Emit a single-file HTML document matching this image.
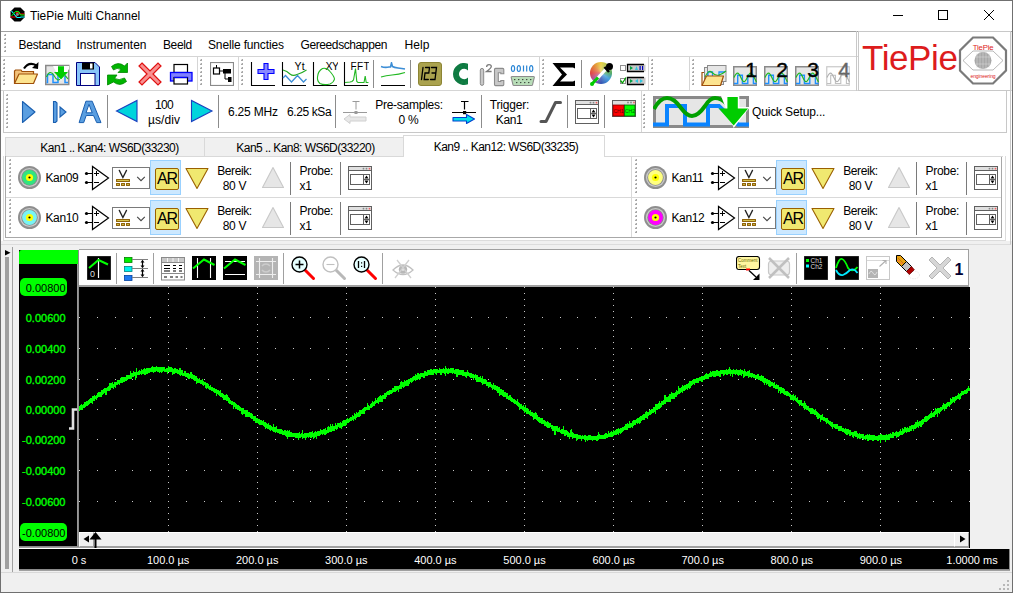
<!DOCTYPE html>
<html><head><meta charset="utf-8"><style>
html,body{margin:0;padding:0;}
body{width:1013px;height:593px;overflow:hidden;position:relative;background:#f0f0f0;font-family:"Liberation Sans", sans-serif;}
body>div,body>svg{position:absolute;}
</style></head><body>
<div style="left:0px;top:0px;width:1013px;height:31px;background:#fff"></div>
<div style="left:0px;top:0px;width:1013px;height:1px;background:#707070"></div>
<div style="left:0px;top:0px;width:1px;height:593px;background:#707070"></div>
<div style="left:1012px;top:0px;width:1px;height:593px;background:#707070"></div>
<div style="left:0px;top:592px;width:1013px;height:1px;background:#707070"></div>
<div style="left:1px;top:31px;width:1011px;height:1px;background:#a0a0a0"></div>
<svg style="left:10px;top:7px" width="15" height="15" viewBox="0 0 15 15"><polygon points="4.5,0.5 10.5,0.5 14.5,4.5 14.5,10.5 10.5,14.5 4.5,14.5 0.5,10.5 0.5,4.5" fill="#000"/><path d="M0.5,10 H5.5 L7,8.5" stroke="#f00" stroke-width="1.1" fill="none"/><path d="M6,7 Q7,4.5 8.5,5 L10,7 H14.5" stroke="#f00" stroke-width="1.1" fill="none"/><path d="M1.5,4 L7,10.5 H10 L11,10 H14.5" stroke="#0ff" stroke-width="1.1" fill="none"/><path d="M1.5,9 L5,5 Q7,3.5 9,5 L10.5,8 H14.5" stroke="#0f0" stroke-width="1" fill="none"/><circle cx="7.5" cy="7.5" r="1.4" fill="#888"/></svg>
<div style="left:30px;top:9.84px;font-size:12px;line-height:12px;color:#000;white-space:nowrap;letter-spacing:0px;">TiePie Multi Channel</div>
<svg style="left:892px;top:10px" width="12" height="12" viewBox="0 0 12 12"><path d="M1,5.5 H11" stroke="#000" stroke-width="1"/></svg>
<svg style="left:937px;top:9px" width="12" height="12" viewBox="0 0 12 12"><rect x="1.5" y="1.5" width="9" height="9" fill="none" stroke="#000" stroke-width="1"/></svg>
<svg style="left:983px;top:9px" width="12" height="12" viewBox="0 0 12 12"><path d="M1,1 L11,11 M11,1 L1,11" stroke="#000" stroke-width="1"/></svg>
<div style="left:1px;top:32px;width:857px;height:58px;background:#fff"></div>
<div style="left:1px;top:56px;width:857px;height:1px;background:#d5d5d5"></div>
<div style="left:1px;top:90px;width:1011px;height:1px;background:#d5d5d5"></div>
<svg style="left:4px;top:34px" width="2" height="18" viewBox="0 0 2 18"><rect x="0" y="0" width="2" height="2" fill="#a8a8a8"/><rect x="0" y="0" width="1" height="1" fill="#e0e0e0"/><rect x="0" y="4" width="2" height="2" fill="#a8a8a8"/><rect x="0" y="4" width="1" height="1" fill="#e0e0e0"/><rect x="0" y="8" width="2" height="2" fill="#a8a8a8"/><rect x="0" y="8" width="1" height="1" fill="#e0e0e0"/><rect x="0" y="12" width="2" height="2" fill="#a8a8a8"/><rect x="0" y="12" width="1" height="1" fill="#e0e0e0"/><rect x="0" y="16" width="2" height="2" fill="#a8a8a8"/><rect x="0" y="16" width="1" height="1" fill="#e0e0e0"/></svg>
<div style="left:18.5px;top:38.84px;font-size:12px;line-height:12px;color:#000;white-space:nowrap;letter-spacing:-0.25px;">Bestand</div>
<div style="left:76.5px;top:38.84px;font-size:12px;line-height:12px;color:#000;white-space:nowrap;letter-spacing:0px;">Instrumenten</div>
<div style="left:163px;top:38.84px;font-size:12px;line-height:12px;color:#000;white-space:nowrap;letter-spacing:-0.4px;">Beeld</div>
<div style="left:208px;top:38.84px;font-size:12px;line-height:12px;color:#000;white-space:nowrap;letter-spacing:-0.15px;">Snelle functies</div>
<div style="left:300.5px;top:38.84px;font-size:12px;line-height:12px;color:#000;white-space:nowrap;letter-spacing:-0.4px;">Gereedschappen</div>
<div style="left:404.5px;top:38.84px;font-size:12px;line-height:12px;color:#000;white-space:nowrap;letter-spacing:0.1px;">Help</div>
<div style="left:856px;top:31px;width:1px;height:60px;background:#c8c8c8"></div>
<div style="left:858px;top:31px;width:153px;height:60px;background:#fff;box-sizing:border-box;border:1px solid #c8c8c8"></div>
<svg style="left:3px;top:59px" width="2" height="26" viewBox="0 0 2 26"><rect x="0" y="0" width="2" height="2" fill="#a8a8a8"/><rect x="0" y="0" width="1" height="1" fill="#e0e0e0"/><rect x="0" y="4" width="2" height="2" fill="#a8a8a8"/><rect x="0" y="4" width="1" height="1" fill="#e0e0e0"/><rect x="0" y="8" width="2" height="2" fill="#a8a8a8"/><rect x="0" y="8" width="1" height="1" fill="#e0e0e0"/><rect x="0" y="12" width="2" height="2" fill="#a8a8a8"/><rect x="0" y="12" width="1" height="1" fill="#e0e0e0"/><rect x="0" y="16" width="2" height="2" fill="#a8a8a8"/><rect x="0" y="16" width="1" height="1" fill="#e0e0e0"/><rect x="0" y="20" width="2" height="2" fill="#a8a8a8"/><rect x="0" y="20" width="1" height="1" fill="#e0e0e0"/><rect x="0" y="24" width="2" height="2" fill="#a8a8a8"/><rect x="0" y="24" width="1" height="1" fill="#e0e0e0"/></svg>
<div style="left:197px;top:57px;width:1px;height:33px;background:#d5d5d5"></div>
<div style="left:238px;top:57px;width:1px;height:33px;background:#d5d5d5"></div>
<div style="left:539px;top:57px;width:1px;height:33px;background:#d5d5d5"></div>
<div style="left:648px;top:57px;width:1px;height:33px;background:#d5d5d5"></div>
<div style="left:689px;top:57px;width:1px;height:33px;background:#d5d5d5"></div>
<svg style="left:200px;top:59px" width="2" height="26" viewBox="0 0 2 26"><rect x="0" y="0" width="2" height="2" fill="#a8a8a8"/><rect x="0" y="0" width="1" height="1" fill="#e0e0e0"/><rect x="0" y="4" width="2" height="2" fill="#a8a8a8"/><rect x="0" y="4" width="1" height="1" fill="#e0e0e0"/><rect x="0" y="8" width="2" height="2" fill="#a8a8a8"/><rect x="0" y="8" width="1" height="1" fill="#e0e0e0"/><rect x="0" y="12" width="2" height="2" fill="#a8a8a8"/><rect x="0" y="12" width="1" height="1" fill="#e0e0e0"/><rect x="0" y="16" width="2" height="2" fill="#a8a8a8"/><rect x="0" y="16" width="1" height="1" fill="#e0e0e0"/><rect x="0" y="20" width="2" height="2" fill="#a8a8a8"/><rect x="0" y="20" width="1" height="1" fill="#e0e0e0"/><rect x="0" y="24" width="2" height="2" fill="#a8a8a8"/><rect x="0" y="24" width="1" height="1" fill="#e0e0e0"/></svg>
<svg style="left:241px;top:59px" width="2" height="26" viewBox="0 0 2 26"><rect x="0" y="0" width="2" height="2" fill="#a8a8a8"/><rect x="0" y="0" width="1" height="1" fill="#e0e0e0"/><rect x="0" y="4" width="2" height="2" fill="#a8a8a8"/><rect x="0" y="4" width="1" height="1" fill="#e0e0e0"/><rect x="0" y="8" width="2" height="2" fill="#a8a8a8"/><rect x="0" y="8" width="1" height="1" fill="#e0e0e0"/><rect x="0" y="12" width="2" height="2" fill="#a8a8a8"/><rect x="0" y="12" width="1" height="1" fill="#e0e0e0"/><rect x="0" y="16" width="2" height="2" fill="#a8a8a8"/><rect x="0" y="16" width="1" height="1" fill="#e0e0e0"/><rect x="0" y="20" width="2" height="2" fill="#a8a8a8"/><rect x="0" y="20" width="1" height="1" fill="#e0e0e0"/><rect x="0" y="24" width="2" height="2" fill="#a8a8a8"/><rect x="0" y="24" width="1" height="1" fill="#e0e0e0"/></svg>
<svg style="left:542px;top:59px" width="2" height="26" viewBox="0 0 2 26"><rect x="0" y="0" width="2" height="2" fill="#a8a8a8"/><rect x="0" y="0" width="1" height="1" fill="#e0e0e0"/><rect x="0" y="4" width="2" height="2" fill="#a8a8a8"/><rect x="0" y="4" width="1" height="1" fill="#e0e0e0"/><rect x="0" y="8" width="2" height="2" fill="#a8a8a8"/><rect x="0" y="8" width="1" height="1" fill="#e0e0e0"/><rect x="0" y="12" width="2" height="2" fill="#a8a8a8"/><rect x="0" y="12" width="1" height="1" fill="#e0e0e0"/><rect x="0" y="16" width="2" height="2" fill="#a8a8a8"/><rect x="0" y="16" width="1" height="1" fill="#e0e0e0"/><rect x="0" y="20" width="2" height="2" fill="#a8a8a8"/><rect x="0" y="20" width="1" height="1" fill="#e0e0e0"/><rect x="0" y="24" width="2" height="2" fill="#a8a8a8"/><rect x="0" y="24" width="1" height="1" fill="#e0e0e0"/></svg>
<svg style="left:651px;top:59px" width="2" height="26" viewBox="0 0 2 26"><rect x="0" y="0" width="2" height="2" fill="#a8a8a8"/><rect x="0" y="0" width="1" height="1" fill="#e0e0e0"/><rect x="0" y="4" width="2" height="2" fill="#a8a8a8"/><rect x="0" y="4" width="1" height="1" fill="#e0e0e0"/><rect x="0" y="8" width="2" height="2" fill="#a8a8a8"/><rect x="0" y="8" width="1" height="1" fill="#e0e0e0"/><rect x="0" y="12" width="2" height="2" fill="#a8a8a8"/><rect x="0" y="12" width="1" height="1" fill="#e0e0e0"/><rect x="0" y="16" width="2" height="2" fill="#a8a8a8"/><rect x="0" y="16" width="1" height="1" fill="#e0e0e0"/><rect x="0" y="20" width="2" height="2" fill="#a8a8a8"/><rect x="0" y="20" width="1" height="1" fill="#e0e0e0"/><rect x="0" y="24" width="2" height="2" fill="#a8a8a8"/><rect x="0" y="24" width="1" height="1" fill="#e0e0e0"/></svg>
<svg style="left:692px;top:59px" width="2" height="26" viewBox="0 0 2 26"><rect x="0" y="0" width="2" height="2" fill="#a8a8a8"/><rect x="0" y="0" width="1" height="1" fill="#e0e0e0"/><rect x="0" y="4" width="2" height="2" fill="#a8a8a8"/><rect x="0" y="4" width="1" height="1" fill="#e0e0e0"/><rect x="0" y="8" width="2" height="2" fill="#a8a8a8"/><rect x="0" y="8" width="1" height="1" fill="#e0e0e0"/><rect x="0" y="12" width="2" height="2" fill="#a8a8a8"/><rect x="0" y="12" width="1" height="1" fill="#e0e0e0"/><rect x="0" y="16" width="2" height="2" fill="#a8a8a8"/><rect x="0" y="16" width="1" height="1" fill="#e0e0e0"/><rect x="0" y="20" width="2" height="2" fill="#a8a8a8"/><rect x="0" y="20" width="1" height="1" fill="#e0e0e0"/><rect x="0" y="24" width="2" height="2" fill="#a8a8a8"/><rect x="0" y="24" width="1" height="1" fill="#e0e0e0"/></svg>
<div style="left:373px;top:60px;width:1px;height:28px;background:#8c8c8c"></div>
<div style="left:410px;top:60px;width:1px;height:28px;background:#8c8c8c"></div>
<div style="left:581px;top:60px;width:1px;height:28px;background:#8c8c8c"></div>
<div style="left:1px;top:91px;width:1011px;height:46px;background:#fff"></div>
<div style="left:3px;top:91px;width:1004px;height:42px;box-sizing:border-box;border:1px solid #c8c8c8;border-top:none"></div>
<svg style="left:6px;top:94px" width="2" height="34" viewBox="0 0 2 34"><rect x="0" y="0" width="2" height="2" fill="#a8a8a8"/><rect x="0" y="0" width="1" height="1" fill="#e0e0e0"/><rect x="0" y="4" width="2" height="2" fill="#a8a8a8"/><rect x="0" y="4" width="1" height="1" fill="#e0e0e0"/><rect x="0" y="8" width="2" height="2" fill="#a8a8a8"/><rect x="0" y="8" width="1" height="1" fill="#e0e0e0"/><rect x="0" y="12" width="2" height="2" fill="#a8a8a8"/><rect x="0" y="12" width="1" height="1" fill="#e0e0e0"/><rect x="0" y="16" width="2" height="2" fill="#a8a8a8"/><rect x="0" y="16" width="1" height="1" fill="#e0e0e0"/><rect x="0" y="20" width="2" height="2" fill="#a8a8a8"/><rect x="0" y="20" width="1" height="1" fill="#e0e0e0"/><rect x="0" y="24" width="2" height="2" fill="#a8a8a8"/><rect x="0" y="24" width="1" height="1" fill="#e0e0e0"/><rect x="0" y="28" width="2" height="2" fill="#a8a8a8"/><rect x="0" y="28" width="1" height="1" fill="#e0e0e0"/><rect x="0" y="32" width="2" height="2" fill="#a8a8a8"/><rect x="0" y="32" width="1" height="1" fill="#e0e0e0"/></svg>
<svg style="left:643px;top:94px" width="2" height="34" viewBox="0 0 2 34"><rect x="0" y="0" width="2" height="2" fill="#a8a8a8"/><rect x="0" y="0" width="1" height="1" fill="#e0e0e0"/><rect x="0" y="4" width="2" height="2" fill="#a8a8a8"/><rect x="0" y="4" width="1" height="1" fill="#e0e0e0"/><rect x="0" y="8" width="2" height="2" fill="#a8a8a8"/><rect x="0" y="8" width="1" height="1" fill="#e0e0e0"/><rect x="0" y="12" width="2" height="2" fill="#a8a8a8"/><rect x="0" y="12" width="1" height="1" fill="#e0e0e0"/><rect x="0" y="16" width="2" height="2" fill="#a8a8a8"/><rect x="0" y="16" width="1" height="1" fill="#e0e0e0"/><rect x="0" y="20" width="2" height="2" fill="#a8a8a8"/><rect x="0" y="20" width="1" height="1" fill="#e0e0e0"/><rect x="0" y="24" width="2" height="2" fill="#a8a8a8"/><rect x="0" y="24" width="1" height="1" fill="#e0e0e0"/><rect x="0" y="28" width="2" height="2" fill="#a8a8a8"/><rect x="0" y="28" width="1" height="1" fill="#e0e0e0"/><rect x="0" y="32" width="2" height="2" fill="#a8a8a8"/><rect x="0" y="32" width="1" height="1" fill="#e0e0e0"/></svg>
<div style="left:641px;top:91px;width:1px;height:41px;background:#d5d5d5"></div>
<div style="left:107px;top:95px;width:1px;height:33px;background:#8c8c8c"></div>
<div style="left:218px;top:95px;width:1px;height:33px;background:#8c8c8c"></div>
<div style="left:335px;top:95px;width:1px;height:33px;background:#8c8c8c"></div>
<div style="left:481px;top:95px;width:1px;height:33px;background:#8c8c8c"></div>
<div style="left:567px;top:95px;width:1px;height:33px;background:#8c8c8c"></div>
<div style="left:604px;top:95px;width:1px;height:33px;background:#8c8c8c"></div>
<div style="left:1px;top:137px;width:1011px;height:104px;background:#fff"></div>
<div style="left:5px;top:137px;width:399px;height:20px;background:#f0f0f0;box-sizing:border-box;border:1px solid #d9d9d9"></div>
<div style="left:204px;top:138px;width:1px;height:18px;background:#d9d9d9"></div>
<div style="left:403px;top:135px;width:202px;height:22px;background:#fff;box-sizing:border-box;border:1px solid #d9d9d9;border-bottom:none"></div>
<div style="left:-90.5px;top:141.84px;width:400px;text-align:center;font-size:12px;line-height:12px;color:#000;letter-spacing:-0.55px;">Kan1 .. Kan4: WS6D(33230)</div>
<div style="left:105.5px;top:141.84px;width:400px;text-align:center;font-size:12px;line-height:12px;color:#000;letter-spacing:-0.55px;">Kan5 .. Kan8: WS6D(33220)</div>
<div style="left:306px;top:140.84px;width:400px;text-align:center;font-size:12px;line-height:12px;color:#000;letter-spacing:-0.55px;">Kan9 .. Kan12: WS6D(33235)</div>
<div style="left:1px;top:156px;width:1010px;height:89px;box-sizing:border-box;border-right:1px solid #c8c8c8;border-bottom:1px solid #dcdcdc"></div>
<div style="left:3px;top:156px;width:1003px;height:85px;box-sizing:border-box;border:1px solid #dcdcdc;border-top:none"></div>
<div style="left:5px;top:156px;width:997px;height:82px;box-sizing:border-box;border:1px solid #a8a8a8;border-top:none"></div>
<div style="left:605px;top:156px;width:398px;height:1px;background:#d9d9d9"></div>
<div style="left:6px;top:197px;width:995px;height:1px;background:#d9d9d9"></div>
<div style="left:631px;top:157px;width:1px;height:80px;background:#d9d9d9"></div>
<div style="left:1010px;top:91px;width:1px;height:66px;background:#c8c8c8"></div>
<div style="left:12px;top:247px;width:1px;height:325px;background:#a0a0a0"></div>
<div style="left:5px;top:257px;width:4px;height:312px;background:#a0a0a0"></div>
<svg style="left:5px;top:250px" width="6" height="6" viewBox="0 0 6 6"><polygon points="0,0 5.5,2.75 0,5.5" fill="#000"/></svg>
<div style="left:19px;top:250px;width:59px;height:297px;background:#000"></div>
<div style="left:19px;top:250px;width:59px;height:14px;background:#00ff00;border-top-left-radius:3px"></div>
<div style="left:77px;top:264px;width:1px;height:283px;background:#9a9a9a"></div>
<div style="left:78px;top:250px;width:1px;height:297px;background:#8a8a8a"></div>
<div style="left:19px;top:546px;width:60px;height:1px;background:#8a8a8a"></div>
<div style="left:19px;top:547px;width:60px;height:1px;background:#a0a0a0"></div>
<div style="left:19px;top:548px;width:60px;height:1px;background:#fff"></div>
<div style="left:79px;top:249px;width:890px;height:38px;background:#fff;box-sizing:border-box;border-top:1px solid #a0a0a0;border-right:1px solid #a0a0a0;border-bottom:2px solid #a0a0a0"></div>
<div style="left:79px;top:287px;width:891px;height:245px;background:#000"></div>
<div style="left:79px;top:532px;width:891px;height:16px;background:#f0f0f0"></div>
<div style="left:79px;top:532px;width:891px;height:1px;background:#fff"></div>
<div style="left:79px;top:547px;width:891px;height:1px;background:#a0a0a0"></div>
<div style="left:79px;top:548px;width:891px;height:1px;background:#fff"></div>
<div style="left:79px;top:532px;width:15px;height:15px;box-sizing:border-box;border-top:1px solid #fff;border-left:1px solid #fff;border-right:1px solid #a0a0a0;border-bottom:1px solid #a0a0a0;background:#f0f0f0"></div>
<div style="left:954px;top:532px;width:15px;height:15px;box-sizing:border-box;border-top:1px solid #fff;border-left:1px solid #fff;border-right:1px solid #a0a0a0;border-bottom:1px solid #a0a0a0;background:#f0f0f0"></div>
<div style="left:94px;top:546px;width:860px;height:1px;background:#a0a0a0"></div>
<div style="left:969px;top:532px;width:1px;height:16px;background:#000"></div>
<svg style="left:83px;top:535px" width="7" height="8" viewBox="0 0 7 8"><polygon points="0.5,4 6,0.5 6,7.5" fill="#000"/></svg>
<svg style="left:959px;top:535px" width="7" height="8" viewBox="0 0 7 8"><polygon points="6.5,4 1,0.5 1,7.5" fill="#000"/></svg>
<svg style="left:89px;top:531px" width="13" height="17" viewBox="0 0 13 17"><polygon points="6.5,1 12.5,8.5 0.5,8.5" fill="#000"/><rect x="5.5" y="8" width="2" height="9" fill="#000"/></svg>
<svg style="left:66px;top:406px" width="12" height="26" viewBox="0 0 12 26"><path d="M3,22.5 H7 V3.5 H11" stroke="#e0e0e0" stroke-width="2.6" fill="none"/></svg>
<div style="left:19px;top:549px;width:991px;height:21px;background:#000"></div>
<div style="left:19px;top:569px;width:991px;height:1px;background:#8a8a8a"></div>
<div style="left:19px;top:570px;width:991px;height:1px;background:#a0a0a0"></div>
<div style="left:1009px;top:549px;width:1px;height:21px;background:#8a8a8a"></div>
<div style="left:1px;top:572px;width:1011px;height:1px;background:#d9d9d9"></div>
<svg style="left:79px;top:287px" width="891" height="245" viewBox="0 0 891 245"><path d="M0 30h1v1h-1zM18 30h1v1h-1zM36 30h1v1h-1zM53 30h1v1h-1zM71 30h1v1h-1zM89 30h1v1h-1zM107 30h1v1h-1zM125 30h1v1h-1zM142 30h1v1h-1zM160 30h1v1h-1zM178 30h1v1h-1zM196 30h1v1h-1zM214 30h1v1h-1zM231 30h1v1h-1zM249 30h1v1h-1zM267 30h1v1h-1zM285 30h1v1h-1zM303 30h1v1h-1zM320 30h1v1h-1zM338 30h1v1h-1zM356 30h1v1h-1zM374 30h1v1h-1zM392 30h1v1h-1zM409 30h1v1h-1zM427 30h1v1h-1zM445 30h1v1h-1zM463 30h1v1h-1zM481 30h1v1h-1zM498 30h1v1h-1zM516 30h1v1h-1zM534 30h1v1h-1zM552 30h1v1h-1zM570 30h1v1h-1zM587 30h1v1h-1zM605 30h1v1h-1zM623 30h1v1h-1zM641 30h1v1h-1zM659 30h1v1h-1zM676 30h1v1h-1zM694 30h1v1h-1zM712 30h1v1h-1zM730 30h1v1h-1zM748 30h1v1h-1zM765 30h1v1h-1zM783 30h1v1h-1zM801 30h1v1h-1zM819 30h1v1h-1zM837 30h1v1h-1zM854 30h1v1h-1zM872 30h1v1h-1zM890 30h1v1h-1zM0 61h1v1h-1zM18 61h1v1h-1zM36 61h1v1h-1zM53 61h1v1h-1zM71 61h1v1h-1zM89 61h1v1h-1zM107 61h1v1h-1zM125 61h1v1h-1zM142 61h1v1h-1zM160 61h1v1h-1zM178 61h1v1h-1zM196 61h1v1h-1zM214 61h1v1h-1zM231 61h1v1h-1zM249 61h1v1h-1zM267 61h1v1h-1zM285 61h1v1h-1zM303 61h1v1h-1zM320 61h1v1h-1zM338 61h1v1h-1zM356 61h1v1h-1zM374 61h1v1h-1zM392 61h1v1h-1zM409 61h1v1h-1zM427 61h1v1h-1zM445 61h1v1h-1zM463 61h1v1h-1zM481 61h1v1h-1zM498 61h1v1h-1zM516 61h1v1h-1zM534 61h1v1h-1zM552 61h1v1h-1zM570 61h1v1h-1zM587 61h1v1h-1zM605 61h1v1h-1zM623 61h1v1h-1zM641 61h1v1h-1zM659 61h1v1h-1zM676 61h1v1h-1zM694 61h1v1h-1zM712 61h1v1h-1zM730 61h1v1h-1zM748 61h1v1h-1zM765 61h1v1h-1zM783 61h1v1h-1zM801 61h1v1h-1zM819 61h1v1h-1zM837 61h1v1h-1zM854 61h1v1h-1zM872 61h1v1h-1zM890 61h1v1h-1zM0 92h1v1h-1zM18 92h1v1h-1zM36 92h1v1h-1zM53 92h1v1h-1zM71 92h1v1h-1zM89 92h1v1h-1zM107 92h1v1h-1zM125 92h1v1h-1zM142 92h1v1h-1zM160 92h1v1h-1zM178 92h1v1h-1zM196 92h1v1h-1zM214 92h1v1h-1zM231 92h1v1h-1zM249 92h1v1h-1zM267 92h1v1h-1zM285 92h1v1h-1zM303 92h1v1h-1zM320 92h1v1h-1zM338 92h1v1h-1zM356 92h1v1h-1zM374 92h1v1h-1zM392 92h1v1h-1zM409 92h1v1h-1zM427 92h1v1h-1zM445 92h1v1h-1zM463 92h1v1h-1zM481 92h1v1h-1zM498 92h1v1h-1zM516 92h1v1h-1zM534 92h1v1h-1zM552 92h1v1h-1zM570 92h1v1h-1zM587 92h1v1h-1zM605 92h1v1h-1zM623 92h1v1h-1zM641 92h1v1h-1zM659 92h1v1h-1zM676 92h1v1h-1zM694 92h1v1h-1zM712 92h1v1h-1zM730 92h1v1h-1zM748 92h1v1h-1zM765 92h1v1h-1zM783 92h1v1h-1zM801 92h1v1h-1zM819 92h1v1h-1zM837 92h1v1h-1zM854 92h1v1h-1zM872 92h1v1h-1zM890 92h1v1h-1zM0 122h1v1h-1zM18 122h1v1h-1zM36 122h1v1h-1zM53 122h1v1h-1zM71 122h1v1h-1zM89 122h1v1h-1zM107 122h1v1h-1zM125 122h1v1h-1zM142 122h1v1h-1zM160 122h1v1h-1zM178 122h1v1h-1zM196 122h1v1h-1zM214 122h1v1h-1zM231 122h1v1h-1zM249 122h1v1h-1zM267 122h1v1h-1zM285 122h1v1h-1zM303 122h1v1h-1zM320 122h1v1h-1zM338 122h1v1h-1zM356 122h1v1h-1zM374 122h1v1h-1zM392 122h1v1h-1zM409 122h1v1h-1zM427 122h1v1h-1zM445 122h1v1h-1zM463 122h1v1h-1zM481 122h1v1h-1zM498 122h1v1h-1zM516 122h1v1h-1zM534 122h1v1h-1zM552 122h1v1h-1zM570 122h1v1h-1zM587 122h1v1h-1zM605 122h1v1h-1zM623 122h1v1h-1zM641 122h1v1h-1zM659 122h1v1h-1zM676 122h1v1h-1zM694 122h1v1h-1zM712 122h1v1h-1zM730 122h1v1h-1zM748 122h1v1h-1zM765 122h1v1h-1zM783 122h1v1h-1zM801 122h1v1h-1zM819 122h1v1h-1zM837 122h1v1h-1zM854 122h1v1h-1zM872 122h1v1h-1zM890 122h1v1h-1zM0 152h1v1h-1zM18 152h1v1h-1zM36 152h1v1h-1zM53 152h1v1h-1zM71 152h1v1h-1zM89 152h1v1h-1zM107 152h1v1h-1zM125 152h1v1h-1zM142 152h1v1h-1zM160 152h1v1h-1zM178 152h1v1h-1zM196 152h1v1h-1zM214 152h1v1h-1zM231 152h1v1h-1zM249 152h1v1h-1zM267 152h1v1h-1zM285 152h1v1h-1zM303 152h1v1h-1zM320 152h1v1h-1zM338 152h1v1h-1zM356 152h1v1h-1zM374 152h1v1h-1zM392 152h1v1h-1zM409 152h1v1h-1zM427 152h1v1h-1zM445 152h1v1h-1zM463 152h1v1h-1zM481 152h1v1h-1zM498 152h1v1h-1zM516 152h1v1h-1zM534 152h1v1h-1zM552 152h1v1h-1zM570 152h1v1h-1zM587 152h1v1h-1zM605 152h1v1h-1zM623 152h1v1h-1zM641 152h1v1h-1zM659 152h1v1h-1zM676 152h1v1h-1zM694 152h1v1h-1zM712 152h1v1h-1zM730 152h1v1h-1zM748 152h1v1h-1zM765 152h1v1h-1zM783 152h1v1h-1zM801 152h1v1h-1zM819 152h1v1h-1zM837 152h1v1h-1zM854 152h1v1h-1zM872 152h1v1h-1zM890 152h1v1h-1zM0 183h1v1h-1zM18 183h1v1h-1zM36 183h1v1h-1zM53 183h1v1h-1zM71 183h1v1h-1zM89 183h1v1h-1zM107 183h1v1h-1zM125 183h1v1h-1zM142 183h1v1h-1zM160 183h1v1h-1zM178 183h1v1h-1zM196 183h1v1h-1zM214 183h1v1h-1zM231 183h1v1h-1zM249 183h1v1h-1zM267 183h1v1h-1zM285 183h1v1h-1zM303 183h1v1h-1zM320 183h1v1h-1zM338 183h1v1h-1zM356 183h1v1h-1zM374 183h1v1h-1zM392 183h1v1h-1zM409 183h1v1h-1zM427 183h1v1h-1zM445 183h1v1h-1zM463 183h1v1h-1zM481 183h1v1h-1zM498 183h1v1h-1zM516 183h1v1h-1zM534 183h1v1h-1zM552 183h1v1h-1zM570 183h1v1h-1zM587 183h1v1h-1zM605 183h1v1h-1zM623 183h1v1h-1zM641 183h1v1h-1zM659 183h1v1h-1zM676 183h1v1h-1zM694 183h1v1h-1zM712 183h1v1h-1zM730 183h1v1h-1zM748 183h1v1h-1zM765 183h1v1h-1zM783 183h1v1h-1zM801 183h1v1h-1zM819 183h1v1h-1zM837 183h1v1h-1zM854 183h1v1h-1zM872 183h1v1h-1zM890 183h1v1h-1zM0 214h1v1h-1zM18 214h1v1h-1zM36 214h1v1h-1zM53 214h1v1h-1zM71 214h1v1h-1zM89 214h1v1h-1zM107 214h1v1h-1zM125 214h1v1h-1zM142 214h1v1h-1zM160 214h1v1h-1zM178 214h1v1h-1zM196 214h1v1h-1zM214 214h1v1h-1zM231 214h1v1h-1zM249 214h1v1h-1zM267 214h1v1h-1zM285 214h1v1h-1zM303 214h1v1h-1zM320 214h1v1h-1zM338 214h1v1h-1zM356 214h1v1h-1zM374 214h1v1h-1zM392 214h1v1h-1zM409 214h1v1h-1zM427 214h1v1h-1zM445 214h1v1h-1zM463 214h1v1h-1zM481 214h1v1h-1zM498 214h1v1h-1zM516 214h1v1h-1zM534 214h1v1h-1zM552 214h1v1h-1zM570 214h1v1h-1zM587 214h1v1h-1zM605 214h1v1h-1zM623 214h1v1h-1zM641 214h1v1h-1zM659 214h1v1h-1zM676 214h1v1h-1zM694 214h1v1h-1zM712 214h1v1h-1zM730 214h1v1h-1zM748 214h1v1h-1zM765 214h1v1h-1zM783 214h1v1h-1zM801 214h1v1h-1zM819 214h1v1h-1zM837 214h1v1h-1zM854 214h1v1h-1zM872 214h1v1h-1zM890 214h1v1h-1zM89 0h1v1h-1zM89 6h1v1h-1zM89 12h1v1h-1zM89 18h1v1h-1zM89 24h1v1h-1zM89 30h1v1h-1zM89 37h1v1h-1zM89 43h1v1h-1zM89 49h1v1h-1zM89 55h1v1h-1zM89 61h1v1h-1zM89 67h1v1h-1zM89 73h1v1h-1zM89 79h1v1h-1zM89 85h1v1h-1zM89 92h1v1h-1zM89 98h1v1h-1zM89 104h1v1h-1zM89 110h1v1h-1zM89 116h1v1h-1zM89 122h1v1h-1zM89 128h1v1h-1zM89 134h1v1h-1zM89 140h1v1h-1zM89 146h1v1h-1zM89 152h1v1h-1zM89 159h1v1h-1zM89 165h1v1h-1zM89 171h1v1h-1zM89 177h1v1h-1zM89 183h1v1h-1zM89 189h1v1h-1zM89 195h1v1h-1zM89 201h1v1h-1zM89 207h1v1h-1zM89 214h1v1h-1zM89 220h1v1h-1zM89 226h1v1h-1zM89 232h1v1h-1zM89 238h1v1h-1zM89 244h1v1h-1zM178 0h1v1h-1zM178 6h1v1h-1zM178 12h1v1h-1zM178 18h1v1h-1zM178 24h1v1h-1zM178 30h1v1h-1zM178 37h1v1h-1zM178 43h1v1h-1zM178 49h1v1h-1zM178 55h1v1h-1zM178 61h1v1h-1zM178 67h1v1h-1zM178 73h1v1h-1zM178 79h1v1h-1zM178 85h1v1h-1zM178 92h1v1h-1zM178 98h1v1h-1zM178 104h1v1h-1zM178 110h1v1h-1zM178 116h1v1h-1zM178 122h1v1h-1zM178 128h1v1h-1zM178 134h1v1h-1zM178 140h1v1h-1zM178 146h1v1h-1zM178 152h1v1h-1zM178 159h1v1h-1zM178 165h1v1h-1zM178 171h1v1h-1zM178 177h1v1h-1zM178 183h1v1h-1zM178 189h1v1h-1zM178 195h1v1h-1zM178 201h1v1h-1zM178 207h1v1h-1zM178 214h1v1h-1zM178 220h1v1h-1zM178 226h1v1h-1zM178 232h1v1h-1zM178 238h1v1h-1zM178 244h1v1h-1zM267 0h1v1h-1zM267 6h1v1h-1zM267 12h1v1h-1zM267 18h1v1h-1zM267 24h1v1h-1zM267 30h1v1h-1zM267 37h1v1h-1zM267 43h1v1h-1zM267 49h1v1h-1zM267 55h1v1h-1zM267 61h1v1h-1zM267 67h1v1h-1zM267 73h1v1h-1zM267 79h1v1h-1zM267 85h1v1h-1zM267 92h1v1h-1zM267 98h1v1h-1zM267 104h1v1h-1zM267 110h1v1h-1zM267 116h1v1h-1zM267 122h1v1h-1zM267 128h1v1h-1zM267 134h1v1h-1zM267 140h1v1h-1zM267 146h1v1h-1zM267 152h1v1h-1zM267 159h1v1h-1zM267 165h1v1h-1zM267 171h1v1h-1zM267 177h1v1h-1zM267 183h1v1h-1zM267 189h1v1h-1zM267 195h1v1h-1zM267 201h1v1h-1zM267 207h1v1h-1zM267 214h1v1h-1zM267 220h1v1h-1zM267 226h1v1h-1zM267 232h1v1h-1zM267 238h1v1h-1zM267 244h1v1h-1zM356 0h1v1h-1zM356 6h1v1h-1zM356 12h1v1h-1zM356 18h1v1h-1zM356 24h1v1h-1zM356 30h1v1h-1zM356 37h1v1h-1zM356 43h1v1h-1zM356 49h1v1h-1zM356 55h1v1h-1zM356 61h1v1h-1zM356 67h1v1h-1zM356 73h1v1h-1zM356 79h1v1h-1zM356 85h1v1h-1zM356 92h1v1h-1zM356 98h1v1h-1zM356 104h1v1h-1zM356 110h1v1h-1zM356 116h1v1h-1zM356 122h1v1h-1zM356 128h1v1h-1zM356 134h1v1h-1zM356 140h1v1h-1zM356 146h1v1h-1zM356 152h1v1h-1zM356 159h1v1h-1zM356 165h1v1h-1zM356 171h1v1h-1zM356 177h1v1h-1zM356 183h1v1h-1zM356 189h1v1h-1zM356 195h1v1h-1zM356 201h1v1h-1zM356 207h1v1h-1zM356 214h1v1h-1zM356 220h1v1h-1zM356 226h1v1h-1zM356 232h1v1h-1zM356 238h1v1h-1zM356 244h1v1h-1zM445 0h1v1h-1zM445 6h1v1h-1zM445 12h1v1h-1zM445 18h1v1h-1zM445 24h1v1h-1zM445 30h1v1h-1zM445 37h1v1h-1zM445 43h1v1h-1zM445 49h1v1h-1zM445 55h1v1h-1zM445 61h1v1h-1zM445 67h1v1h-1zM445 73h1v1h-1zM445 79h1v1h-1zM445 85h1v1h-1zM445 92h1v1h-1zM445 98h1v1h-1zM445 104h1v1h-1zM445 110h1v1h-1zM445 116h1v1h-1zM445 122h1v1h-1zM445 128h1v1h-1zM445 134h1v1h-1zM445 140h1v1h-1zM445 146h1v1h-1zM445 152h1v1h-1zM445 159h1v1h-1zM445 165h1v1h-1zM445 171h1v1h-1zM445 177h1v1h-1zM445 183h1v1h-1zM445 189h1v1h-1zM445 195h1v1h-1zM445 201h1v1h-1zM445 207h1v1h-1zM445 214h1v1h-1zM445 220h1v1h-1zM445 226h1v1h-1zM445 232h1v1h-1zM445 238h1v1h-1zM445 244h1v1h-1zM534 0h1v1h-1zM534 6h1v1h-1zM534 12h1v1h-1zM534 18h1v1h-1zM534 24h1v1h-1zM534 30h1v1h-1zM534 37h1v1h-1zM534 43h1v1h-1zM534 49h1v1h-1zM534 55h1v1h-1zM534 61h1v1h-1zM534 67h1v1h-1zM534 73h1v1h-1zM534 79h1v1h-1zM534 85h1v1h-1zM534 92h1v1h-1zM534 98h1v1h-1zM534 104h1v1h-1zM534 110h1v1h-1zM534 116h1v1h-1zM534 122h1v1h-1zM534 128h1v1h-1zM534 134h1v1h-1zM534 140h1v1h-1zM534 146h1v1h-1zM534 152h1v1h-1zM534 159h1v1h-1zM534 165h1v1h-1zM534 171h1v1h-1zM534 177h1v1h-1zM534 183h1v1h-1zM534 189h1v1h-1zM534 195h1v1h-1zM534 201h1v1h-1zM534 207h1v1h-1zM534 214h1v1h-1zM534 220h1v1h-1zM534 226h1v1h-1zM534 232h1v1h-1zM534 238h1v1h-1zM534 244h1v1h-1zM623 0h1v1h-1zM623 6h1v1h-1zM623 12h1v1h-1zM623 18h1v1h-1zM623 24h1v1h-1zM623 30h1v1h-1zM623 37h1v1h-1zM623 43h1v1h-1zM623 49h1v1h-1zM623 55h1v1h-1zM623 61h1v1h-1zM623 67h1v1h-1zM623 73h1v1h-1zM623 79h1v1h-1zM623 85h1v1h-1zM623 92h1v1h-1zM623 98h1v1h-1zM623 104h1v1h-1zM623 110h1v1h-1zM623 116h1v1h-1zM623 122h1v1h-1zM623 128h1v1h-1zM623 134h1v1h-1zM623 140h1v1h-1zM623 146h1v1h-1zM623 152h1v1h-1zM623 159h1v1h-1zM623 165h1v1h-1zM623 171h1v1h-1zM623 177h1v1h-1zM623 183h1v1h-1zM623 189h1v1h-1zM623 195h1v1h-1zM623 201h1v1h-1zM623 207h1v1h-1zM623 214h1v1h-1zM623 220h1v1h-1zM623 226h1v1h-1zM623 232h1v1h-1zM623 238h1v1h-1zM623 244h1v1h-1zM712 0h1v1h-1zM712 6h1v1h-1zM712 12h1v1h-1zM712 18h1v1h-1zM712 24h1v1h-1zM712 30h1v1h-1zM712 37h1v1h-1zM712 43h1v1h-1zM712 49h1v1h-1zM712 55h1v1h-1zM712 61h1v1h-1zM712 67h1v1h-1zM712 73h1v1h-1zM712 79h1v1h-1zM712 85h1v1h-1zM712 92h1v1h-1zM712 98h1v1h-1zM712 104h1v1h-1zM712 110h1v1h-1zM712 116h1v1h-1zM712 122h1v1h-1zM712 128h1v1h-1zM712 134h1v1h-1zM712 140h1v1h-1zM712 146h1v1h-1zM712 152h1v1h-1zM712 159h1v1h-1zM712 165h1v1h-1zM712 171h1v1h-1zM712 177h1v1h-1zM712 183h1v1h-1zM712 189h1v1h-1zM712 195h1v1h-1zM712 201h1v1h-1zM712 207h1v1h-1zM712 214h1v1h-1zM712 220h1v1h-1zM712 226h1v1h-1zM712 232h1v1h-1zM712 238h1v1h-1zM712 244h1v1h-1zM801 0h1v1h-1zM801 6h1v1h-1zM801 12h1v1h-1zM801 18h1v1h-1zM801 24h1v1h-1zM801 30h1v1h-1zM801 37h1v1h-1zM801 43h1v1h-1zM801 49h1v1h-1zM801 55h1v1h-1zM801 61h1v1h-1zM801 67h1v1h-1zM801 73h1v1h-1zM801 79h1v1h-1zM801 85h1v1h-1zM801 92h1v1h-1zM801 98h1v1h-1zM801 104h1v1h-1zM801 110h1v1h-1zM801 116h1v1h-1zM801 122h1v1h-1zM801 128h1v1h-1zM801 134h1v1h-1zM801 140h1v1h-1zM801 146h1v1h-1zM801 152h1v1h-1zM801 159h1v1h-1zM801 165h1v1h-1zM801 171h1v1h-1zM801 177h1v1h-1zM801 183h1v1h-1zM801 189h1v1h-1zM801 195h1v1h-1zM801 201h1v1h-1zM801 207h1v1h-1zM801 214h1v1h-1zM801 220h1v1h-1zM801 226h1v1h-1zM801 232h1v1h-1zM801 238h1v1h-1zM801 244h1v1h-1z" fill="#c8c8c8" shape-rendering="crispEdges"/></svg>
<svg style="left:79px;top:287px" width="891" height="245" viewBox="0 0 891 245"><path d="M0 119h1v5h-1zM1 118h1v5h-1zM2 117h1v6h-1zM3 118h1v5h-1zM4 117h1v4h-1zM5 115h1v6h-1zM6 115h1v5h-1zM7 114h1v5h-1zM8 114h1v5h-1zM9 113h1v5h-1zM10 112h1v5h-1zM11 111h1v5h-1zM12 111h1v5h-1zM13 109h1v8h-1zM14 109h1v5h-1zM15 108h1v6h-1zM16 109h1v3h-1zM17 108h1v5h-1zM18 106h1v5h-1zM19 105h1v5h-1zM20 105h1v5h-1zM21 105h1v5h-1zM22 103h1v7h-1zM23 103h1v5h-1zM24 102h1v5h-1zM25 101h1v5h-1zM26 101h1v7h-1zM27 101h1v7h-1zM28 100h1v4h-1zM29 99h1v5h-1zM30 96h1v8h-1zM31 96h1v7h-1zM32 96h1v5h-1zM33 95h1v6h-1zM34 97h1v5h-1zM35 95h1v5h-1zM36 95h1v6h-1zM37 95h1v3h-1zM38 93h1v5h-1zM39 93h1v4h-1zM40 93h1v5h-1zM41 91h1v5h-1zM42 90h1v6h-1zM43 90h1v6h-1zM44 90h1v5h-1zM45 90h1v5h-1zM46 90h1v4h-1zM47 88h1v6h-1zM48 88h1v5h-1zM49 88h1v4h-1zM50 88h1v4h-1zM51 84h1v8h-1zM52 86h1v6h-1zM53 86h1v4h-1zM54 84h1v6h-1zM55 85h1v4h-1zM56 85h1v8h-1zM57 81h1v10h-1zM58 85h1v3h-1zM59 84h1v4h-1zM60 83h1v5h-1zM61 84h1v3h-1zM62 82h1v6h-1zM63 83h1v4h-1zM64 82h1v5h-1zM65 81h1v7h-1zM66 82h1v6h-1zM67 81h1v6h-1zM68 81h1v6h-1zM69 81h1v5h-1zM70 81h1v5h-1zM71 81h1v4h-1zM72 80h1v5h-1zM73 79h1v6h-1zM74 80h1v6h-1zM75 80h1v5h-1zM76 80h1v5h-1zM77 79h1v5h-1zM78 80h1v5h-1zM79 80h1v5h-1zM80 80h1v6h-1zM81 80h1v5h-1zM82 80h1v6h-1zM83 80h1v5h-1zM84 80h1v4h-1zM85 80h1v5h-1zM86 82h1v3h-1zM87 81h1v4h-1zM88 81h1v6h-1zM89 79h1v6h-1zM90 80h1v5h-1zM91 80h1v5h-1zM92 80h1v5h-1zM93 81h1v7h-1zM94 82h1v5h-1zM95 81h1v6h-1zM96 81h1v5h-1zM97 82h1v4h-1zM98 82h1v5h-1zM99 83h1v4h-1zM100 81h1v7h-1zM101 81h1v8h-1zM102 83h1v5h-1zM103 83h1v6h-1zM104 86h1v3h-1zM105 84h1v5h-1zM106 84h1v6h-1zM107 86h1v4h-1zM108 86h1v5h-1zM109 86h1v6h-1zM110 87h1v5h-1zM111 85h1v6h-1zM112 85h1v7h-1zM113 87h1v5h-1zM114 88h1v5h-1zM115 88h1v6h-1zM116 89h1v5h-1zM117 89h1v8h-1zM118 91h1v5h-1zM119 92h1v4h-1zM120 91h1v5h-1zM121 93h1v4h-1zM122 93h1v4h-1zM123 92h1v6h-1zM124 94h1v5h-1zM125 95h1v3h-1zM126 95h1v6h-1zM127 96h1v6h-1zM128 96h1v5h-1zM129 97h1v5h-1zM130 99h1v4h-1zM131 98h1v5h-1zM132 100h1v4h-1zM133 100h1v4h-1zM134 101h1v4h-1zM135 101h1v5h-1zM136 102h1v4h-1zM137 102h1v7h-1zM138 103h1v4h-1zM139 103h1v5h-1zM140 104h1v5h-1zM141 103h1v7h-1zM142 106h1v4h-1zM143 106h1v5h-1zM144 107h1v6h-1zM145 108h1v5h-1zM146 108h1v5h-1zM147 107h1v7h-1zM148 108h1v6h-1zM149 110h1v6h-1zM150 111h1v6h-1zM151 113h1v4h-1zM152 114h1v4h-1zM153 114h1v4h-1zM154 115h1v7h-1zM155 115h1v5h-1zM156 116h1v6h-1zM157 117h1v5h-1zM158 118h1v5h-1zM159 118h1v5h-1zM160 119h1v5h-1zM161 120h1v4h-1zM162 121h1v6h-1zM163 121h1v7h-1zM164 121h1v6h-1zM165 123h1v4h-1zM166 123h1v7h-1zM167 123h1v7h-1zM168 123h1v7h-1zM169 125h1v5h-1zM170 125h1v5h-1zM171 126h1v5h-1zM172 126h1v6h-1zM173 127h1v5h-1zM174 129h1v5h-1zM175 129h1v5h-1zM176 129h1v7h-1zM177 131h1v5h-1zM178 131h1v5h-1zM179 132h1v5h-1zM180 132h1v6h-1zM181 133h1v5h-1zM182 133h1v5h-1zM183 134h1v4h-1zM184 133h1v6h-1zM185 135h1v5h-1zM186 135h1v7h-1zM187 136h1v5h-1zM188 137h1v5h-1zM189 136h1v6h-1zM190 138h1v5h-1zM191 138h1v6h-1zM192 139h1v4h-1zM193 140h1v4h-1zM194 137h1v8h-1zM195 140h1v5h-1zM196 140h1v6h-1zM197 139h1v6h-1zM198 142h1v4h-1zM199 142h1v4h-1zM200 142h1v5h-1zM201 142h1v5h-1zM202 142h1v5h-1zM203 143h1v5h-1zM204 144h1v4h-1zM205 143h1v5h-1zM206 143h1v6h-1zM207 144h1v6h-1zM208 143h1v9h-1zM209 144h1v6h-1zM210 143h1v7h-1zM211 145h1v5h-1zM212 145h1v5h-1zM213 146h1v4h-1zM214 146h1v4h-1zM215 146h1v4h-1zM216 146h1v5h-1zM217 146h1v5h-1zM218 146h1v5h-1zM219 146h1v7h-1zM220 145h1v6h-1zM221 147h1v4h-1zM222 146h1v4h-1zM223 143h1v9h-1zM224 147h1v4h-1zM225 146h1v5h-1zM226 146h1v7h-1zM227 146h1v5h-1zM228 146h1v4h-1zM229 146h1v5h-1zM230 145h1v5h-1zM231 145h1v6h-1zM232 145h1v6h-1zM233 144h1v6h-1zM234 146h1v6h-1zM235 145h1v6h-1zM236 144h1v6h-1zM237 145h1v7h-1zM238 144h1v5h-1zM239 144h1v5h-1zM240 144h1v5h-1zM241 142h1v6h-1zM242 143h1v4h-1zM243 143h1v5h-1zM244 142h1v5h-1zM245 142h1v6h-1zM246 141h1v7h-1zM247 143h1v4h-1zM248 140h1v6h-1zM249 139h1v7h-1zM250 140h1v5h-1zM251 137h1v8h-1zM252 139h1v6h-1zM253 137h1v7h-1zM254 139h1v5h-1zM255 139h1v5h-1zM256 136h1v6h-1zM257 138h1v5h-1zM258 136h1v6h-1zM259 136h1v4h-1zM260 136h1v5h-1zM261 135h1v6h-1zM262 136h1v6h-1zM263 134h1v6h-1zM264 133h1v6h-1zM265 133h1v6h-1zM266 133h1v6h-1zM267 132h1v6h-1zM268 131h1v5h-1zM269 132h1v4h-1zM270 131h1v4h-1zM271 130h1v4h-1zM272 130h1v4h-1zM273 128h1v5h-1zM274 129h1v5h-1zM275 126h1v6h-1zM276 127h1v6h-1zM277 125h1v6h-1zM278 126h1v4h-1zM279 125h1v5h-1zM280 123h1v7h-1zM281 123h1v6h-1zM282 123h1v4h-1zM283 122h1v5h-1zM284 121h1v6h-1zM285 120h1v7h-1zM286 120h1v4h-1zM287 120h1v3h-1zM288 116h1v7h-1zM289 118h1v5h-1zM290 119h1v4h-1zM291 117h1v4h-1zM292 116h1v5h-1zM293 114h1v6h-1zM294 115h1v4h-1zM295 114h1v5h-1zM296 111h1v6h-1zM297 113h1v3h-1zM298 111h1v5h-1zM299 110h1v7h-1zM300 109h1v6h-1zM301 108h1v7h-1zM302 109h1v6h-1zM303 108h1v7h-1zM304 108h1v4h-1zM305 106h1v6h-1zM306 106h1v6h-1zM307 105h1v5h-1zM308 104h1v4h-1zM309 104h1v4h-1zM310 103h1v5h-1zM311 103h1v4h-1zM312 103h1v4h-1zM313 101h1v5h-1zM314 101h1v4h-1zM315 99h1v6h-1zM316 99h1v6h-1zM317 99h1v5h-1zM318 99h1v4h-1zM319 99h1v6h-1zM320 98h1v4h-1zM321 95h1v7h-1zM322 94h1v8h-1zM323 95h1v5h-1zM324 95h1v6h-1zM325 93h1v7h-1zM326 94h1v5h-1zM327 93h1v6h-1zM328 93h1v6h-1zM329 92h1v7h-1zM330 92h1v5h-1zM331 91h1v4h-1zM332 91h1v5h-1zM333 90h1v5h-1zM334 89h1v5h-1zM335 89h1v4h-1zM336 87h1v7h-1zM337 88h1v5h-1zM338 86h1v7h-1zM339 86h1v6h-1zM340 87h1v6h-1zM341 86h1v6h-1zM342 86h1v4h-1zM343 86h1v4h-1zM344 86h1v5h-1zM345 84h1v7h-1zM346 84h1v5h-1zM347 85h1v4h-1zM348 83h1v6h-1zM349 83h1v5h-1zM350 83h1v5h-1zM351 82h1v6h-1zM352 82h1v6h-1zM353 83h1v5h-1zM354 82h1v6h-1zM355 82h1v4h-1zM356 82h1v5h-1zM357 82h1v6h-1zM358 82h1v4h-1zM359 83h1v3h-1zM360 81h1v5h-1zM361 82h1v6h-1zM362 82h1v6h-1zM363 82h1v4h-1zM364 81h1v5h-1zM365 82h1v5h-1zM366 79h1v10h-1zM367 81h1v5h-1zM368 82h1v5h-1zM369 81h1v6h-1zM370 82h1v4h-1zM371 81h1v5h-1zM372 81h1v5h-1zM373 81h1v6h-1zM374 81h1v5h-1zM375 83h1v4h-1zM376 82h1v5h-1zM377 82h1v8h-1zM378 82h1v8h-1zM379 82h1v6h-1zM380 83h1v5h-1zM381 83h1v5h-1zM382 83h1v5h-1zM383 83h1v6h-1zM384 83h1v6h-1zM385 85h1v4h-1zM386 85h1v5h-1zM387 85h1v6h-1zM388 83h1v6h-1zM389 85h1v4h-1zM390 86h1v4h-1zM391 86h1v5h-1zM392 86h1v5h-1zM393 87h1v4h-1zM394 87h1v6h-1zM395 88h1v3h-1zM396 87h1v6h-1zM397 88h1v7h-1zM398 88h1v7h-1zM399 90h1v5h-1zM400 90h1v5h-1zM401 89h1v6h-1zM402 91h1v5h-1zM403 89h1v9h-1zM404 92h1v5h-1zM405 92h1v5h-1zM406 92h1v5h-1zM407 93h1v6h-1zM408 95h1v4h-1zM409 95h1v6h-1zM410 95h1v5h-1zM411 95h1v5h-1zM412 97h1v4h-1zM413 98h1v5h-1zM414 96h1v6h-1zM415 98h1v5h-1zM416 98h1v5h-1zM417 99h1v5h-1zM418 99h1v7h-1zM419 100h1v6h-1zM420 100h1v9h-1zM421 102h1v6h-1zM422 102h1v6h-1zM423 103h1v6h-1zM424 103h1v7h-1zM425 105h1v5h-1zM426 105h1v5h-1zM427 106h1v6h-1zM428 106h1v6h-1zM429 109h1v4h-1zM430 108h1v5h-1zM431 108h1v6h-1zM432 110h1v5h-1zM433 111h1v4h-1zM434 112h1v4h-1zM435 112h1v5h-1zM436 113h1v4h-1zM437 114h1v4h-1zM438 112h1v7h-1zM439 115h1v5h-1zM440 116h1v7h-1zM441 117h1v5h-1zM442 117h1v5h-1zM443 119h1v4h-1zM444 118h1v6h-1zM445 120h1v6h-1zM446 118h1v7h-1zM447 121h1v6h-1zM448 121h1v6h-1zM449 122h1v5h-1zM450 124h1v4h-1zM451 123h1v6h-1zM452 125h1v4h-1zM453 125h1v5h-1zM454 126h1v7h-1zM455 126h1v6h-1zM456 125h1v7h-1zM457 126h1v7h-1zM458 128h1v6h-1zM459 130h1v5h-1zM460 130h1v6h-1zM461 131h1v5h-1zM462 131h1v6h-1zM463 131h1v6h-1zM464 133h1v4h-1zM465 133h1v6h-1zM466 134h1v5h-1zM467 135h1v5h-1zM468 134h1v7h-1zM469 135h1v6h-1zM470 136h1v5h-1zM471 136h1v4h-1zM472 138h1v4h-1zM473 138h1v6h-1zM474 139h1v5h-1zM475 139h1v9h-1zM476 139h1v9h-1zM477 139h1v5h-1zM478 139h1v6h-1zM479 141h1v4h-1zM480 140h1v5h-1zM481 143h1v3h-1zM482 142h1v5h-1zM483 142h1v5h-1zM484 139h1v8h-1zM485 143h1v6h-1zM486 143h1v6h-1zM487 143h1v5h-1zM488 144h1v6h-1zM489 145h1v5h-1zM490 146h1v6h-1zM491 143h1v7h-1zM492 142h1v8h-1zM493 145h1v7h-1zM494 146h1v5h-1zM495 147h1v4h-1zM496 147h1v4h-1zM497 147h1v7h-1zM498 147h1v6h-1zM499 148h1v4h-1zM500 148h1v4h-1zM501 148h1v4h-1zM502 149h1v5h-1zM503 148h1v4h-1zM504 149h1v3h-1zM505 148h1v5h-1zM506 148h1v7h-1zM507 149h1v4h-1zM508 149h1v5h-1zM509 148h1v5h-1zM510 148h1v5h-1zM511 148h1v5h-1zM512 149h1v4h-1zM513 149h1v5h-1zM514 149h1v4h-1zM515 149h1v4h-1zM516 149h1v4h-1zM517 149h1v5h-1zM518 148h1v6h-1zM519 145h1v8h-1zM520 147h1v5h-1zM521 148h1v4h-1zM522 148h1v4h-1zM523 148h1v4h-1zM524 148h1v4h-1zM525 147h1v5h-1zM526 146h1v6h-1zM527 146h1v5h-1zM528 147h1v4h-1zM529 144h1v6h-1zM530 146h1v4h-1zM531 145h1v5h-1zM532 144h1v6h-1zM533 145h1v5h-1zM534 143h1v6h-1zM535 144h1v4h-1zM536 143h1v5h-1zM537 142h1v6h-1zM538 142h1v5h-1zM539 141h1v7h-1zM540 142h1v4h-1zM541 141h1v6h-1zM542 141h1v5h-1zM543 140h1v5h-1zM544 140h1v4h-1zM545 139h1v4h-1zM546 137h1v6h-1zM547 137h1v6h-1zM548 136h1v7h-1zM549 137h1v4h-1zM550 134h1v7h-1zM551 136h1v5h-1zM552 136h1v4h-1zM553 134h1v7h-1zM554 133h1v6h-1zM555 133h1v5h-1zM556 133h1v5h-1zM557 132h1v4h-1zM558 131h1v6h-1zM559 131h1v5h-1zM560 130h1v7h-1zM561 129h1v7h-1zM562 129h1v5h-1zM563 128h1v5h-1zM564 127h1v6h-1zM565 127h1v6h-1zM566 125h1v6h-1zM567 124h1v7h-1zM568 125h1v7h-1zM569 125h1v4h-1zM570 123h1v5h-1zM571 123h1v5h-1zM572 122h1v5h-1zM573 122h1v4h-1zM574 120h1v6h-1zM575 120h1v5h-1zM576 117h1v10h-1zM577 117h1v6h-1zM578 117h1v6h-1zM579 116h1v6h-1zM580 114h1v8h-1zM581 116h1v5h-1zM582 114h1v6h-1zM583 114h1v4h-1zM584 113h1v5h-1zM585 108h1v9h-1zM586 108h1v9h-1zM587 110h1v5h-1zM588 110h1v5h-1zM589 109h1v6h-1zM590 107h1v8h-1zM591 107h1v8h-1zM592 105h1v7h-1zM593 106h1v6h-1zM594 106h1v6h-1zM595 106h1v6h-1zM596 105h1v5h-1zM597 103h1v7h-1zM598 104h1v4h-1zM599 99h1v8h-1zM600 101h1v6h-1zM601 101h1v5h-1zM602 100h1v5h-1zM603 98h1v8h-1zM604 99h1v5h-1zM605 98h1v6h-1zM606 98h1v5h-1zM607 97h1v5h-1zM608 97h1v6h-1zM609 96h1v5h-1zM610 94h1v8h-1zM611 94h1v7h-1zM612 94h1v5h-1zM613 93h1v5h-1zM614 92h1v5h-1zM615 92h1v6h-1zM616 92h1v4h-1zM617 91h1v5h-1zM618 91h1v5h-1zM619 91h1v5h-1zM620 90h1v4h-1zM621 90h1v4h-1zM622 89h1v6h-1zM623 89h1v6h-1zM624 89h1v4h-1zM625 88h1v5h-1zM626 87h1v5h-1zM627 86h1v6h-1zM628 87h1v5h-1zM629 87h1v5h-1zM630 86h1v4h-1zM631 84h1v6h-1zM632 85h1v5h-1zM633 84h1v5h-1zM634 84h1v6h-1zM635 84h1v6h-1zM636 84h1v6h-1zM637 83h1v6h-1zM638 83h1v6h-1zM639 84h1v5h-1zM640 84h1v6h-1zM641 83h1v7h-1zM642 83h1v4h-1zM643 83h1v4h-1zM644 83h1v6h-1zM645 83h1v5h-1zM646 83h1v4h-1zM647 82h1v6h-1zM648 83h1v5h-1zM649 82h1v5h-1zM650 80h1v7h-1zM651 82h1v7h-1zM652 83h1v4h-1zM653 83h1v7h-1zM654 82h1v5h-1zM655 83h1v4h-1zM656 83h1v5h-1zM657 82h1v5h-1zM658 83h1v5h-1zM659 83h1v6h-1zM660 83h1v5h-1zM661 82h1v6h-1zM662 83h1v6h-1zM663 83h1v4h-1zM664 84h1v7h-1zM665 82h1v8h-1zM666 84h1v5h-1zM667 85h1v4h-1zM668 84h1v5h-1zM669 84h1v7h-1zM670 83h1v7h-1zM671 86h1v4h-1zM672 86h1v5h-1zM673 86h1v4h-1zM674 87h1v4h-1zM675 87h1v4h-1zM676 88h1v4h-1zM677 88h1v4h-1zM678 87h1v5h-1zM679 87h1v6h-1zM680 89h1v4h-1zM681 89h1v5h-1zM682 88h1v6h-1zM683 89h1v6h-1zM684 89h1v7h-1zM685 91h1v7h-1zM686 91h1v5h-1zM687 92h1v6h-1zM688 92h1v5h-1zM689 93h1v6h-1zM690 93h1v7h-1zM691 94h1v6h-1zM692 95h1v4h-1zM693 95h1v4h-1zM694 96h1v5h-1zM695 95h1v6h-1zM696 98h1v4h-1zM697 97h1v5h-1zM698 98h1v4h-1zM699 98h1v8h-1zM700 100h1v4h-1zM701 100h1v7h-1zM702 100h1v6h-1zM703 101h1v5h-1zM704 101h1v6h-1zM705 102h1v6h-1zM706 104h1v4h-1zM707 104h1v5h-1zM708 104h1v5h-1zM709 105h1v4h-1zM710 106h1v4h-1zM711 107h1v6h-1zM712 108h1v5h-1zM713 108h1v5h-1zM714 107h1v7h-1zM715 109h1v4h-1zM716 108h1v6h-1zM717 111h1v4h-1zM718 110h1v6h-1zM719 113h1v4h-1zM720 113h1v6h-1zM721 113h1v5h-1zM722 113h1v6h-1zM723 116h1v3h-1zM724 116h1v5h-1zM725 114h1v9h-1zM726 116h1v6h-1zM727 118h1v5h-1zM728 119h1v4h-1zM729 119h1v5h-1zM730 121h1v4h-1zM731 121h1v6h-1zM732 121h1v6h-1zM733 121h1v6h-1zM734 122h1v5h-1zM735 123h1v5h-1zM736 122h1v6h-1zM737 124h1v6h-1zM738 125h1v7h-1zM739 126h1v6h-1zM740 127h1v4h-1zM741 128h1v7h-1zM742 128h1v5h-1zM743 127h1v6h-1zM744 130h1v4h-1zM745 130h1v4h-1zM746 131h1v4h-1zM747 131h1v6h-1zM748 131h1v5h-1zM749 133h1v4h-1zM750 134h1v4h-1zM751 134h1v5h-1zM752 135h1v5h-1zM753 135h1v7h-1zM754 137h1v3h-1zM755 137h1v4h-1zM756 137h1v5h-1zM757 137h1v5h-1zM758 137h1v5h-1zM759 139h1v5h-1zM760 139h1v5h-1zM761 139h1v5h-1zM762 139h1v5h-1zM763 141h1v4h-1zM764 141h1v4h-1zM765 142h1v4h-1zM766 141h1v6h-1zM767 142h1v6h-1zM768 142h1v6h-1zM769 142h1v5h-1zM770 143h1v6h-1zM771 143h1v6h-1zM772 145h1v3h-1zM773 145h1v5h-1zM774 145h1v6h-1zM775 144h1v5h-1zM776 144h1v6h-1zM777 144h1v6h-1zM778 146h1v6h-1zM779 147h1v4h-1zM780 146h1v6h-1zM781 147h1v5h-1zM782 147h1v4h-1zM783 147h1v5h-1zM784 147h1v6h-1zM785 149h1v3h-1zM786 148h1v5h-1zM787 148h1v4h-1zM788 147h1v7h-1zM789 148h1v6h-1zM790 147h1v6h-1zM791 148h1v5h-1zM792 148h1v5h-1zM793 148h1v6h-1zM794 148h1v6h-1zM795 148h1v5h-1zM796 149h1v4h-1zM797 149h1v4h-1zM798 149h1v5h-1zM799 148h1v6h-1zM800 148h1v5h-1zM801 147h1v9h-1zM802 147h1v6h-1zM803 148h1v5h-1zM804 148h1v5h-1zM805 148h1v5h-1zM806 148h1v7h-1zM807 147h1v6h-1zM808 148h1v5h-1zM809 147h1v6h-1zM810 147h1v6h-1zM811 146h1v5h-1zM812 147h1v4h-1zM813 145h1v6h-1zM814 145h1v6h-1zM815 146h1v3h-1zM816 145h1v4h-1zM817 144h1v7h-1zM818 145h1v5h-1zM819 145h1v5h-1zM820 144h1v5h-1zM821 142h1v6h-1zM822 144h1v4h-1zM823 141h1v7h-1zM824 142h1v5h-1zM825 140h1v6h-1zM826 140h1v5h-1zM827 141h1v5h-1zM828 140h1v5h-1zM829 141h1v4h-1zM830 139h1v6h-1zM831 139h1v5h-1zM832 138h1v6h-1zM833 138h1v4h-1zM834 138h1v6h-1zM835 137h1v5h-1zM836 135h1v7h-1zM837 135h1v6h-1zM838 133h1v7h-1zM839 135h1v6h-1zM840 134h1v5h-1zM841 134h1v6h-1zM842 133h1v7h-1zM843 132h1v6h-1zM844 132h1v5h-1zM845 130h1v5h-1zM846 129h1v6h-1zM847 129h1v6h-1zM848 129h1v5h-1zM849 128h1v5h-1zM850 127h1v5h-1zM851 126h1v5h-1zM852 124h1v7h-1zM853 126h1v4h-1zM854 125h1v5h-1zM855 124h1v6h-1zM856 121h1v7h-1zM857 122h1v5h-1zM858 121h1v9h-1zM859 121h1v5h-1zM860 121h1v6h-1zM861 120h1v5h-1zM862 120h1v4h-1zM863 118h1v5h-1zM864 116h1v6h-1zM865 117h1v7h-1zM866 117h1v5h-1zM867 116h1v6h-1zM868 115h1v5h-1zM869 115h1v4h-1zM870 115h1v5h-1zM871 111h1v7h-1zM872 112h1v5h-1zM873 110h1v6h-1zM874 110h1v5h-1zM875 110h1v6h-1zM876 109h1v5h-1zM877 109h1v4h-1zM878 108h1v4h-1zM879 106h1v6h-1zM880 107h1v6h-1zM881 106h1v6h-1zM882 104h1v5h-1zM883 104h1v4h-1zM884 104h1v4h-1zM885 103h1v4h-1zM886 103h1v4h-1zM887 102h1v5h-1zM888 101h1v5h-1zM889 99h1v5h-1zM890 101h1v3h-1z" fill="#00ff00" shape-rendering="crispEdges"/></svg>
<div style="left:20px;top:278px;width:47px;height:18px;background:#00ff00;border-radius:5px"></div>
<div style="left:-334.5px;top:283.19px;width:400px;text-align:right;font-size:11px;line-height:11px;color:#000;letter-spacing:0px;">0.00800</div>
<div style="left:-334.5px;top:313.19px;width:400px;text-align:right;font-size:11px;line-height:11px;color:#00ff00;letter-spacing:0px;-webkit-text-stroke:0.35px #00ff00">0.00600</div>
<div style="left:-334.5px;top:344.19px;width:400px;text-align:right;font-size:11px;line-height:11px;color:#00ff00;letter-spacing:0px;-webkit-text-stroke:0.35px #00ff00">0.00400</div>
<div style="left:-334.5px;top:375.19px;width:400px;text-align:right;font-size:11px;line-height:11px;color:#00ff00;letter-spacing:0px;-webkit-text-stroke:0.35px #00ff00">0.00200</div>
<div style="left:-334.5px;top:405.19px;width:400px;text-align:right;font-size:11px;line-height:11px;color:#00ff00;letter-spacing:0px;-webkit-text-stroke:0.35px #00ff00">0.00000</div>
<div style="left:-334.5px;top:435.19px;width:400px;text-align:right;font-size:11px;line-height:11px;color:#00ff00;letter-spacing:0px;-webkit-text-stroke:0.35px #00ff00">-0.00200</div>
<div style="left:-334.5px;top:466.19px;width:400px;text-align:right;font-size:11px;line-height:11px;color:#00ff00;letter-spacing:0px;-webkit-text-stroke:0.35px #00ff00">-0.00400</div>
<div style="left:-334.5px;top:497.19px;width:400px;text-align:right;font-size:11px;line-height:11px;color:#00ff00;letter-spacing:0px;-webkit-text-stroke:0.35px #00ff00">-0.00600</div>
<div style="left:20px;top:523px;width:47px;height:18px;background:#00ff00;border-radius:5px"></div>
<div style="left:-334.5px;top:528.19px;width:400px;text-align:right;font-size:11px;line-height:11px;color:#000;letter-spacing:0px;">-0.00800</div>
<div style="left:-121.0px;top:554.69px;width:400px;text-align:center;font-size:11px;line-height:11px;color:#fff;letter-spacing:0px;">0 s</div>
<div style="left:-31.900000000000006px;top:554.69px;width:400px;text-align:center;font-size:11px;line-height:11px;color:#fff;letter-spacing:0px;">100.0 µs</div>
<div style="left:57.19999999999999px;top:554.69px;width:400px;text-align:center;font-size:11px;line-height:11px;color:#fff;letter-spacing:0px;">200.0 µs</div>
<div style="left:146.29999999999995px;top:554.69px;width:400px;text-align:center;font-size:11px;line-height:11px;color:#fff;letter-spacing:0px;">300.0 µs</div>
<div style="left:235.39999999999998px;top:554.69px;width:400px;text-align:center;font-size:11px;line-height:11px;color:#fff;letter-spacing:0px;">400.0 µs</div>
<div style="left:324.5px;top:554.69px;width:400px;text-align:center;font-size:11px;line-height:11px;color:#fff;letter-spacing:0px;">500.0 µs</div>
<div style="left:413.5999999999999px;top:554.69px;width:400px;text-align:center;font-size:11px;line-height:11px;color:#fff;letter-spacing:0px;">600.0 µs</div>
<div style="left:502.69999999999993px;top:554.69px;width:400px;text-align:center;font-size:11px;line-height:11px;color:#fff;letter-spacing:0px;">700.0 µs</div>
<div style="left:591.8px;top:554.69px;width:400px;text-align:center;font-size:11px;line-height:11px;color:#fff;letter-spacing:0px;">800.0 µs</div>
<div style="left:680.9px;top:554.69px;width:400px;text-align:center;font-size:11px;line-height:11px;color:#fff;letter-spacing:0px;">900.0 µs</div>
<div style="left:772px;top:554.69px;width:400px;text-align:center;font-size:11px;line-height:11px;color:#fff;letter-spacing:0px;">1.0000 ms</div>
<svg style="left:13px;top:61px" width="26" height="25" viewBox="0 0 26 25">
<path d="M11,7.5 Q16,0 23.5,4.5" stroke="#000" stroke-width="2.2" fill="none"/>
<polygon points="25.5,1 25,8 19,7" fill="#000"/>
<path d="M1.5,22.5 V10 L2.5,9 H8 L9,10.5 H20.5 V13" fill="#f2c27a" stroke="#a0500a" stroke-width="1.2"/>
<polygon points="1.5,22.5 6,13 24.5,13 20.5,22.5" fill="#fde490" stroke="#a0500a" stroke-width="1.2" stroke-linejoin="round"/>
</svg>
<svg style="left:45px;top:64px" width="25" height="22" viewBox="0 0 25 22">
<rect x="0.75" y="1.5" width="23" height="19" fill="#e6e6e6" stroke="#8a8a8a" stroke-width="1.5"/>
<path d="M1.5,18.5 H2.5 V10.5 H8 V18.5 H13 V10.5 H16 M20,10.5 V18.5 H23" stroke="#1e90ff" stroke-width="1.5" fill="none"/>
<path d="M1.5,13 Q3,9 5,8.5 Q7,8 9,11.5 Q11,15.5 13,16 Q15,16 17,13 M19,11 Q21,12 23,15" stroke="#22b822" stroke-width="1.1" fill="none"/>
<polygon points="8,2 24,2 24,5 16,17" fill="#fff"/>
<polygon points="13,2.2 19,2.2 19,8 23,8 16,15.5 9,8 13,8" fill="#00cc00"/>
</svg>
<svg style="left:76px;top:62px" width="24" height="24" viewBox="0 0 24 24">
<path d="M0.5,0.5 H19 L23.5,5 V23.5 H0.5 Z" fill="#88c4f8" stroke="#000080" stroke-width="1"/>
<rect x="6" y="0.5" width="12" height="7" fill="#000"/>
<rect x="14" y="1.5" width="2.5" height="5" fill="#fff"/>
<rect x="4.5" y="11.5" width="14.5" height="12" fill="#fff" stroke="#000080" stroke-width="1"/>
</svg>
<svg style="left:107px;top:62px" width="25" height="25" viewBox="0 0 25 25">
<path d="M4.5,4.5 Q11,-1 17.5,4 L20.5,1 V10.5 H11 L14,7.5 Q10,5 6.5,8 Z" fill="#00b400" stroke="#008800" stroke-width="0.8" stroke-linejoin="round"/>
<path d="M19.5,19.5 Q13,25 6.5,20 L0.5,23 V13 H10 L7.5,16.5 Q12,19 17.5,16 Z" fill="#00b400" stroke="#008800" stroke-width="0.8" stroke-linejoin="round"/>
</svg>
<svg style="left:138px;top:62px" width="24" height="24" viewBox="0 0 24 24">
<path d="M4,1 L12,9 L20,1 L23,4 L15,12 L23,20 L20,23 L12,15 L4,23 L1,20 L9,12 L1,4 Z" fill="#f89090" stroke="#e01010" stroke-width="1.2" stroke-linejoin="miter"/>
</svg>
<svg style="left:169px;top:63px" width="25" height="23" viewBox="0 0 25 23">
<rect x="5" y="1.5" width="13.5" height="8" fill="#fff" stroke="#000" stroke-width="1.2"/>
<rect x="1.5" y="9.5" width="21.5" height="8.5" fill="#8080ff" stroke="#0000ff" stroke-width="1.3"/>
<rect x="5" y="14.5" width="13.5" height="6.5" fill="#fff" stroke="#000" stroke-width="1.2"/>
<path d="M5,14.5 H18.5" stroke="#0000ff" stroke-width="1.3"/>
</svg>
<svg style="left:210px;top:62px" width="24" height="24" viewBox="0 0 24 24">
<rect x="0.5" y="0.5" width="23" height="23" fill="#fff" stroke="#8a8a8a" stroke-width="1.2"/>
<rect x="3.5" y="6" width="6" height="6" fill="#fff" stroke="#000" stroke-width="1.2"/>
<path d="M6.5,3 V6 M9.5,9 H13 M15,11 V17 H18" stroke="#000" stroke-width="1" fill="none"/>
<rect x="13" y="7" width="8" height="4.5" fill="#000"/>
<rect x="18" y="15" width="3.5" height="5" fill="#000"/>
</svg>
<svg style="left:250px;top:62px" width="26" height="25" viewBox="0 0 26 25"><path d="M1.5,0 V23.5 H25" stroke="#000" stroke-width="1.1" fill="none"/>
<path d="M14,1.5 H18 V7.5 H24 V11.5 H18 V17.5 H14 V11.5 H8 V7.5 H14 Z" fill="#8888ff" stroke="#0000ff" stroke-width="1.1"/>
</svg>
<svg style="left:281px;top:62px" width="26" height="25" viewBox="0 0 26 25"><path d="M1.5,0 V23.5 H25" stroke="#000" stroke-width="1.1" fill="none"/>
<text x="13.5" y="8.2" font-family="Liberation Sans" font-size="10.5" fill="#000" letter-spacing="0.3">Yt</text>
<path d="M2,8 Q6,9 9,12 Q12,14.5 16,12.5 Q21,11 25.5,8" stroke="#22aa22" stroke-width="1.1" fill="none"/>
<path d="M2,16 L4.5,13.5 L10.5,20 L16.5,13.5 L22.5,20 L25.5,17" stroke="#3d8ed6" stroke-width="1.3" fill="none"/>
</svg>
<svg style="left:312px;top:62px" width="26" height="25" viewBox="0 0 26 25"><path d="M1.5,0 V23.5 H25" stroke="#000" stroke-width="1.1" fill="none"/>
<text x="13.5" y="8.2" font-family="Liberation Sans" font-size="10.5" fill="#000" letter-spacing="-0.6">XY</text>
<path d="M10.5,6.5 Q15,5.5 18,9.5 Q22,14 22.5,17 Q22,20 18,22 Q12,23.5 8,21.5 Q5,19 5.5,15 Q6,9 10.5,6.5 Z" stroke="#22b822" stroke-width="1.1" fill="none"/>
</svg>
<svg style="left:343px;top:62px" width="26" height="25" viewBox="0 0 26 25"><path d="M1.5,0 V23.5 H25" stroke="#000" stroke-width="1.1" fill="none"/>
<text x="7.5" y="7.8" font-family="Liberation Sans" font-size="10" fill="#000" letter-spacing="0.4">FFT</text>
<path d="M2,20.5 L7,20 L9,19.5 L10.5,18 L12.5,6.5 L13.8,19.5 L15,20.5 L21,20.5 L22.2,14 L23.2,20.5 L25.5,20.5" stroke="#22b822" stroke-width="1.1" fill="none"/>
</svg>
<svg style="left:380px;top:62px" width="26" height="25" viewBox="0 0 26 25">
<path d="M1,4.5 Q5,6 9,5 L10.5,5 L11.5,1 L12.5,4.5 Q14,5.5 18,6 Q22,6.5 25,7" stroke="#3d8ed6" stroke-width="1.6" fill="none"/>
<path d="M1,15 Q6,13.5 12,13 Q19,12.5 25,10.5" stroke="#22b822" stroke-width="1.2" fill="none"/>
<path d="M1,23.5 H25" stroke="#000" stroke-width="1"/>
</svg>
<svg style="left:418px;top:62px" width="24" height="24" viewBox="0 0 24 24">
<rect x="0.5" y="0.5" width="23" height="23" rx="2.5" fill="#aaa24e" stroke="#8c8434" stroke-width="1"/>
<g stroke="#000" stroke-width="1.3" fill="none" stroke-linecap="round">
<path d="M5,5.5 L3.5,17.5"/>
<path d="M7.5,5.5 H11.5 L10.8,11 H7 L6.2,17.5 H10.3"/>
<path d="M13.5,5.5 H18.5 L17,17.5 H12.5 M14,11 H17.5"/>
</g>
</svg>
<svg style="left:452px;top:62px" width="18" height="24" viewBox="0 0 18 24">
<path d="M16,1.75 A11,11 0 1 0 16,22.25 V15.5 A5.2,5.2 0 1 1 16,8.5 Z" fill="#0e7a42"/>
<g fill="#2a9a50"><circle cx="4" cy="9" r="0.5"/><circle cx="6" cy="13" r="0.5"/><circle cx="9" cy="4" r="0.5"/><circle cx="4" cy="16" r="0.5"/><circle cx="10" cy="20" r="0.5"/><circle cx="14" cy="3" r="0.5"/><circle cx="14" cy="21" r="0.5"/></g>
</svg>
<svg style="left:476px;top:60px" width="30" height="28" viewBox="0 0 30 28">
<rect x="4.3" y="8.4" width="3.4" height="17" rx="1.7" fill="#c8c8c8" stroke="#8c8c8c" stroke-width="1"/>
<path d="M10.6,7 Q10.6,4.6 13,4.6 Q15.3,4.6 15.3,6.6 Q15.3,8.2 10.5,11.5 H15.6" stroke="#7a7a7a" stroke-width="1.3" fill="none"/>
<path d="M19.5,8.4 H26.8 Q27.8,8.4 27.8,9.4 V13.8 H24.8 V12.7 H22.3 V21.5 H24.8 V20.5 H27.8 V24.6 Q27.8,25.6 26.8,25.6 H19.5 Q18.5,25.6 18.5,24.6 V9.4 Q18.5,8.4 19.5,8.4 Z" fill="#c8c8c8" stroke="#8c8c8c" stroke-width="1.1"/>
</svg>
<svg style="left:510px;top:62px" width="26" height="25" viewBox="0 0 26 25">
<g fill="none" stroke="#2a86d6" stroke-width="1.2">
<ellipse cx="3" cy="6.6" rx="1.6" ry="2.9"/><ellipse cx="8.8" cy="6.6" rx="1.6" ry="2.9"/>
<path d="M13.5,3.6 V9.6 M16.7,3.6 V9.6"/>
<ellipse cx="21.2" cy="6.6" rx="1.6" ry="2.9"/></g>
<path d="M2,14.5 H23.5 Q24.5,14.5 24.3,15.5 L22.5,22.8 Q22.3,23.5 21.5,23.5 H4 Q3.2,23.5 3,22.8 L1.2,15.5 Q1,14.5 2,14.5 Z" fill="#b8ddb8" stroke="#8c8c8c" stroke-width="1.1"/>
<g fill="#000"><circle cx="4.8" cy="17.6" r="0.6"/><circle cx="8.8" cy="17.6" r="0.6"/><circle cx="12.8" cy="17.6" r="0.6"/><circle cx="16.8" cy="17.6" r="0.6"/><circle cx="20.8" cy="17.6" r="0.6"/>
<circle cx="6.8" cy="20.6" r="0.6"/><circle cx="10.8" cy="20.6" r="0.6"/><circle cx="14.8" cy="20.6" r="0.6"/><circle cx="18.8" cy="20.6" r="0.6"/></g>
</svg>
<svg style="left:551px;top:62px" width="26" height="25" viewBox="0 0 26 25">
<path d="M1.5,1 H24 V6.5 L22,5.5 H9 L16,12.5 L9,19.5 H22 L24,18.5 V24 H1.5 L11,12.5 Z" fill="#000"/>
</svg>
<div style="left:590px;top:62px;width:22px;height:22px;border-radius:50%;background:conic-gradient(from 0deg, #e8d040, #50a860 25%, #40a0e0 35%, #3050b0 50%, #a050b0 62%, #e04040 75%, #e08030 87%, #e8d040)"></div>
<div style="left:590px;top:62px;width:22px;height:22px;border-radius:50%;background:radial-gradient(circle, rgba(255,255,255,0.35) 0%, rgba(255,255,255,0) 70%)"></div>
<svg style="left:589px;top:61px" width="26" height="26" viewBox="0 0 26 26">
<path d="M7,19 L17,8" stroke="#fff" stroke-width="3"/>
<path d="M3,23 L9,16.5" stroke="#00cc00" stroke-width="3"/>
<circle cx="3" cy="23" r="2" fill="#00cc00"/>
<path d="M15.5,6 L20,11" stroke="#000" stroke-width="2.5"/>
<circle cx="20.5" cy="5.5" r="3.5" fill="#000"/>
</svg>
<svg style="left:619px;top:63px" width="27" height="24" viewBox="0 0 27 24">
<rect x="1.5" y="2.5" width="5" height="5" fill="#fff" stroke="#909090" stroke-width="1"/>
<rect x="1.5" y="15.5" width="5" height="5" fill="#fff" stroke="#909090" stroke-width="1"/>
<path d="M1.5,17.5 L3.5,20 L7,14.5" stroke="#00a000" stroke-width="1.3" fill="none"/>
<rect x="8.5" y="1.5" width="18" height="7" fill="#c8c8c8"/><path d="M25,1.5 H8.5 V8.5 H25" stroke="#000" stroke-width="1.3" fill="none"/>
<rect x="8.5" y="14.5" width="18" height="7" fill="#c8c8c8"/><path d="M25,14.5 H8.5 V21.5 H25" stroke="#000" stroke-width="1.3" fill="none"/>
<polygon points="11,3 14,5 11,7" fill="#00a040"/><polygon points="16,7 17.5,3 19,7" fill="#30c8e0"/><rect x="20.5" y="3" width="1.2" height="4" fill="#0000c0"/><rect x="23" y="3" width="1.2" height="4" fill="#0000c0"/>
<polygon points="11,16 14,18 11,20" fill="#00a040"/><polygon points="19,16 16,18 19,20" fill="#30c8e0"/><polygon points="21,16 24,18 21,20" fill="#30c8e0"/>
</svg>
<svg style="left:701px;top:63px" width="27" height="24" viewBox="0 0 27 24">
<rect x="3.5" y="4.5" width="19" height="17" fill="#e6e6e6" stroke="#8a8a8a" stroke-width="1"/>
<rect x="6.5" y="2.5" width="18.5" height="16" fill="#e6e6e6" stroke="#8a8a8a" stroke-width="1"/>
<path d="M7,16 V9 H11.5 V16 H18 V9 H24" stroke="#1e90ff" stroke-width="1.3" fill="none"/>
<path d="M4,14 Q7.5,6 11,9.5 T18,12 T25,8" stroke="#22b822" stroke-width="1.1" fill="none"/>
<path d="M1,22.5 V9.5 H3" fill="none" stroke="#a0500a" stroke-width="1.2"/>
<polygon points="1,22.5 5.5,13 22.5,13 19.5,22.5" fill="#fde490" stroke="#a0500a" stroke-width="1.2" stroke-linejoin="round"/>
</svg>
<svg style="left:733px;top:66px" width="24" height="20" viewBox="0 0 24 20"><rect x="0.75" y="0.75" width="22.5" height="18.5" fill="#e6e6e6" stroke="#8a8a8a" stroke-width="1.5"/>
<path d="M1,17.5 H4.7 V9.2 H9.4 V17.5 H14.8 V9.2 H20.4 V17.5 H23.5" stroke="#1e90ff" stroke-width="1.4" fill="none"/>
<path d="M1,11.5 C2.5,8 3.5,7.1 4.7,7.1 C7,7.1 8.5,15.7 10.9,15.7 C13.5,15.7 15,7.1 17.6,7.1 C20,7.1 21.5,13 23.5,16" stroke="#22b822" stroke-width="1.2" fill="none"/></svg>
<div style="left:551px;top:59.22px;width:400px;text-align:center;font-size:21px;line-height:21px;color:#000;letter-spacing:0px;-webkit-text-stroke:0.4px #000">1</div>
<svg style="left:764px;top:66px" width="24" height="20" viewBox="0 0 24 20"><rect x="0.75" y="0.75" width="22.5" height="18.5" fill="#e6e6e6" stroke="#8a8a8a" stroke-width="1.5"/>
<path d="M1,17.5 H4.7 V9.2 H9.4 V17.5 H14.8 V9.2 H20.4 V17.5 H23.5" stroke="#1e90ff" stroke-width="1.4" fill="none"/>
<path d="M1,11.5 C2.5,8 3.5,7.1 4.7,7.1 C7,7.1 8.5,15.7 10.9,15.7 C13.5,15.7 15,7.1 17.6,7.1 C20,7.1 21.5,13 23.5,16" stroke="#22b822" stroke-width="1.2" fill="none"/></svg>
<div style="left:582px;top:59.22px;width:400px;text-align:center;font-size:21px;line-height:21px;color:#000;letter-spacing:0px;-webkit-text-stroke:0.4px #000">2</div>
<svg style="left:795px;top:66px" width="24" height="20" viewBox="0 0 24 20"><rect x="0.75" y="0.75" width="22.5" height="18.5" fill="#e6e6e6" stroke="#8a8a8a" stroke-width="1.5"/>
<path d="M1,17.5 H4.7 V9.2 H9.4 V17.5 H14.8 V9.2 H20.4 V17.5 H23.5" stroke="#1e90ff" stroke-width="1.4" fill="none"/>
<path d="M1,11.5 C2.5,8 3.5,7.1 4.7,7.1 C7,7.1 8.5,15.7 10.9,15.7 C13.5,15.7 15,7.1 17.6,7.1 C20,7.1 21.5,13 23.5,16" stroke="#22b822" stroke-width="1.2" fill="none"/></svg>
<div style="left:613px;top:59.22px;width:400px;text-align:center;font-size:21px;line-height:21px;color:#000;letter-spacing:0px;-webkit-text-stroke:0.4px #000">3</div>
<svg style="left:826px;top:66px" width="24" height="20" viewBox="0 0 24 20"><rect x="0.75" y="0.75" width="22.5" height="18.5" fill="#fff" stroke="#c8c8c8" stroke-width="1.2"/>
<path d="M1,17.5 H4.7 V9.2 H9.4 V17.5 H14.8 V9.2 H20.4 V17.5 H23.5" stroke="#c0c0c0" stroke-width="1.1" fill="none"/>
<path d="M1,11.5 C2.5,8 3.5,7.1 4.7,7.1 C7,7.1 8.5,15.7 10.9,15.7 C13.5,15.7 15,7.1 17.6,7.1 C20,7.1 21.5,13 23.5,16" stroke="#b0b0b0" stroke-width="1.1" fill="none"/></svg>
<div style="left:644px;top:59.22px;width:400px;text-align:center;font-size:21px;line-height:21px;color:#666;letter-spacing:0px;-webkit-text-stroke:0.4px #666">4</div>
<div style="left:862px;top:40.37px;font-size:35px;line-height:35px;color:#dd1c1c;white-space:nowrap;letter-spacing:-0.4px;">TiePie</div>
<svg style="left:958px;top:36px" width="50" height="50" viewBox="0 0 50 50">
<polygon points="15,1.5 35,1.5 48,14.5 48,34.5 35,47.5 15,47.5 2,34.5 2,14.5" fill="#fff" stroke="#7a7a7a" stroke-width="2.2"/>
<path d="M5,24.5 L15,15 H35 L45,24.5 L35,34 H15 Z" fill="none" stroke="#888" stroke-width="0.6"/>
<circle cx="25" cy="24.5" r="8.5" fill="#a8a8a8"/>
<g stroke="#ddd" stroke-width="0.5"><path d="M19,17 V32 M22,16 V33 M25,16 V33 M28,16 V33 M31,17 V32 M17,21 H33 M17,28 H33"/></g>
<text x="25" y="13.5" text-anchor="middle" font-family="Liberation Sans" font-size="7.8" fill="#dd1c1c" letter-spacing="-0.2">TiePie</text>
<text x="25" y="41.5" text-anchor="middle" font-family="Liberation Sans" font-size="5" fill="#dd1c1c" letter-spacing="-0.1">engineering</text>
</svg>
<svg style="left:21px;top:100px" width="16" height="24" viewBox="0 0 16 24"><polygon points="1.5,1.5 14,12 1.5,22.5" fill="#5a9ee0" stroke="#1a5fb0" stroke-width="1.1" stroke-linejoin="round"/></svg>
<svg style="left:52px;top:100px" width="16" height="24" viewBox="0 0 16 24"><path d="M1.5,1.5 H3.5 L5,3 V21 L3.5,22.5 H1.5 Z" fill="#5a9ee0" stroke="#1a5fb0" stroke-width="1.1"/><polygon points="8,7 14,12 8,17" fill="#5a9ee0" stroke="#1a5fb0" stroke-width="1.1"/></svg>
<svg style="left:78px;top:100px" width="25" height="24" viewBox="0 0 25 24"><path d="M7.9,1.2 H14.2 L23,22.6 H18.7 L15.5,15.5 H8.2 L5.7,22.6 H1.1 Z M11,4.3 L14.2,12.8 H8 Z" fill="#5a9ee0" stroke="#1a5fb0" stroke-width="1" fill-rule="evenodd" stroke-linejoin="miter"/></svg>
<svg style="left:115px;top:99px" width="24" height="25" viewBox="0 0 24 25"><polygon points="22,1.5 22,22.5 1.5,12" fill="#00d4dc" stroke="#1a40c0" stroke-width="1.1"/></svg>
<svg style="left:190px;top:99px" width="24" height="25" viewBox="0 0 24 25"><polygon points="1.5,1.5 1.5,22.5 22,12" fill="#00d4dc" stroke="#1a40c0" stroke-width="1.1"/></svg>
<div style="left:-36px;top:98.84px;width:400px;text-align:center;font-size:12px;line-height:12px;color:#000;letter-spacing:-0.6px;">100</div>
<div style="left:-36px;top:113.84px;width:400px;text-align:center;font-size:12px;line-height:12px;color:#000;letter-spacing:0.1px;">µs/div</div>
<div style="left:228px;top:105.84px;font-size:12px;line-height:12px;color:#000;white-space:nowrap;letter-spacing:-0.2px;">6.25 MHz</div>
<div style="left:287px;top:105.84px;font-size:12px;line-height:12px;color:#000;white-space:nowrap;letter-spacing:-0.4px;">6.25 kSa</div>
<svg style="left:342px;top:99px" width="26" height="26" viewBox="0 0 26 26">
<path d="M10.5,2.5 H17.5 M14,2.5 V10.5 M1,13.5 H25" stroke="#9a9a9a" stroke-width="1" fill="none"/>
<rect x="12.5" y="12" width="3" height="3" fill="#9a9a9a"/>
<polygon points="2,20 8,15.5 8,18 24,18 24,22 8,22 8,24.5" fill="#e8e8e8" stroke="#d0d0d0" stroke-width="1" stroke-linejoin="round"/>
</svg>
<div style="left:209px;top:98.84px;width:400px;text-align:center;font-size:12px;line-height:12px;color:#000;letter-spacing:-0.25px;">Pre-samples:</div>
<div style="left:208.5px;top:113.84px;width:400px;text-align:center;font-size:12px;line-height:12px;color:#000;letter-spacing:-0.3px;">0 %</div>
<svg style="left:451px;top:99px" width="26" height="26" viewBox="0 0 26 26">
<path d="M10,2.5 H17.5 M13.5,2.5 V10.5 M1,13.5 H25" stroke="#000" stroke-width="1.2" fill="none"/>
<rect x="12" y="12" width="3.2" height="3.2" fill="#000"/>
<polygon points="2,18.5 15.5,18.5 15.5,15.5 23.5,20 15.5,24.5 15.5,22 2,22" fill="#00e0e8" stroke="#0040d0" stroke-width="1.1" stroke-linejoin="round"/>
</svg>
<div style="left:309.5px;top:98.84px;width:400px;text-align:center;font-size:12px;line-height:12px;color:#000;letter-spacing:-0.2px;">Trigger:</div>
<div style="left:309px;top:113.84px;width:400px;text-align:center;font-size:12px;line-height:12px;color:#000;letter-spacing:-0.4px;">Kan1</div>
<svg style="left:539px;top:99px" width="24" height="26" viewBox="0 0 24 26"><path d="M2,22.5 H7 L16.5,3.5 H21.5" stroke="#555" stroke-width="3" fill="none" stroke-linecap="round" stroke-linejoin="round"/></svg>
<svg style="left:575px;top:100px" width="25" height="25" viewBox="0 0 25 25">
<rect x="0.5" y="0.5" width="23" height="23" fill="#fff" stroke="#606060" stroke-width="1"/>
<rect x="1" y="1" width="22" height="3.5" fill="#e0e0e0"/>
<path d="M1,4.5 H23.5" stroke="#606060" stroke-width="1"/>
<circle cx="15.5" cy="2.7" r="0.9" fill="#888"/><circle cx="18.5" cy="2.7" r="0.9" fill="#888"/><circle cx="21.5" cy="2.7" r="0.9" fill="#f06060"/>
<rect x="2.5" y="8.5" width="19" height="10" fill="#fff" stroke="#606060" stroke-width="1"/>
<path d="M15.5,8.5 V18.5 M15.5,13.5 H21.5" stroke="#606060" stroke-width="1"/>
<polygon points="16.5,12.5 18.5,9.5 20.5,12.5" fill="#000"/><polygon points="16.5,14.5 18.5,17.5 20.5,14.5" fill="#000"/>
</svg>
<svg style="left:611px;top:99px" width="26" height="20" viewBox="0 0 26 20">
<rect x="1.5" y="1.5" width="23" height="16" fill="#ddd" stroke="#606060" stroke-width="1"/>
<circle cx="17" cy="3.5" r="0.9" fill="#888"/><circle cx="20" cy="3.5" r="0.9" fill="#888"/><circle cx="23" cy="3.5" r="0.9" fill="#f06060"/>
<rect x="2" y="6" width="11" height="11" fill="#ff0000" stroke="#800000" stroke-width="0.8"/>
<rect x="13.5" y="6" width="10.5" height="11" fill="#00ff00" stroke="#006000" stroke-width="0.8"/>
<text x="7.5" y="13.5" text-anchor="middle" font-family="Liberation Sans" font-size="5" fill="#600">CH1</text>
<text x="19" y="13.5" text-anchor="middle" font-family="Liberation Sans" font-size="5" fill="#060">CH2</text>
</svg>
<svg style="left:653px;top:96px" width="97" height="32" viewBox="0 0 97 32">
<rect x="1.5" y="1.5" width="93" height="29" fill="#e6e6e6" stroke="#8a8a8a" stroke-width="3"/>
<path d="M0,28.5 H14 V10 H32 V28.5 H55 V10 H66 L85,28.5 H96" stroke="#0a84ff" stroke-width="4" fill="none"/>
<path d="M1,13 Q7,2 14,2 Q21,2 28,12 Q34,20 39,20 Q45,20 52,10 Q57,2 62,2 Q68,2 74,8" stroke="#00a000" stroke-width="4" fill="none"/>
<polygon points="68,0 86.3,0 86.3,11 97,11 80.7,32" fill="#fff"/>
<polygon points="74.4,1 84.8,1 84.8,12.6 95.1,12.6 80.7,29.5 65.8,12.6 74.4,12.6" fill="#00cc00"/>
</svg>
<div style="left:752px;top:105.84px;font-size:12px;line-height:12px;color:#000;white-space:nowrap;letter-spacing:-0.15px;">Quick Setup...</div>
<svg style="left:9px;top:159px" width="2" height="34" viewBox="0 0 2 34"><rect x="0" y="0" width="2" height="2" fill="#a8a8a8"/><rect x="0" y="0" width="1" height="1" fill="#e0e0e0"/><rect x="0" y="4" width="2" height="2" fill="#a8a8a8"/><rect x="0" y="4" width="1" height="1" fill="#e0e0e0"/><rect x="0" y="8" width="2" height="2" fill="#a8a8a8"/><rect x="0" y="8" width="1" height="1" fill="#e0e0e0"/><rect x="0" y="12" width="2" height="2" fill="#a8a8a8"/><rect x="0" y="12" width="1" height="1" fill="#e0e0e0"/><rect x="0" y="16" width="2" height="2" fill="#a8a8a8"/><rect x="0" y="16" width="1" height="1" fill="#e0e0e0"/><rect x="0" y="20" width="2" height="2" fill="#a8a8a8"/><rect x="0" y="20" width="1" height="1" fill="#e0e0e0"/><rect x="0" y="24" width="2" height="2" fill="#a8a8a8"/><rect x="0" y="24" width="1" height="1" fill="#e0e0e0"/><rect x="0" y="28" width="2" height="2" fill="#a8a8a8"/><rect x="0" y="28" width="1" height="1" fill="#e0e0e0"/><rect x="0" y="32" width="2" height="2" fill="#a8a8a8"/><rect x="0" y="32" width="1" height="1" fill="#e0e0e0"/></svg>
<svg style="left:17px;top:165px" width="25" height="25" viewBox="0 0 25 25">
<circle cx="12.5" cy="12.5" r="11.5" fill="#8e8e8e"/>
<circle cx="12.5" cy="12.5" r="9.6" fill="#c8c8c8"/>
<circle cx="12.5" cy="12.5" r="8.2" fill="#8a8a8a"/>
<circle cx="12.5" cy="12.5" r="7.4" fill="#30e480"/>
<circle cx="12.5" cy="12.5" r="3.6" fill="#ffff00"/>
<circle cx="12.5" cy="12.5" r="1.1" fill="#000"/>
</svg>
<div style="left:45.5px;top:171.84px;font-size:12px;line-height:12px;color:#000;white-space:nowrap;letter-spacing:-0.4px;">Kan09</div>
<svg style="left:84px;top:165px" width="26" height="26" viewBox="0 0 26 26">
<path d="M8.5,1.5 V24.5 L24.5,13 Z" fill="#fff" stroke="#000" stroke-width="1.2" stroke-linejoin="miter"/>
<path d="M2,8.5 H8.5 M2,17.5 H8.5 M10,8.5 H15 M12.5,6 V11 M10,17.5 H15" stroke="#000" stroke-width="1"/>
<circle cx="2.5" cy="8.5" r="1.6" fill="#000"/><circle cx="2.5" cy="17.5" r="1.6" fill="#000"/>
</svg>
<div style="left:112px;top:167px;width:38px;height:22px;background:#fff;box-sizing:border-box;border:1px solid #7a7a7a"></div>
<svg style="left:112px;top:167px" width="38" height="22" viewBox="0 0 38 22">
<path d="M7.3,3.4 L10.9,10.5 L14.5,3.4" stroke="#222" stroke-width="1.3" fill="none" stroke-linecap="round"/>
<rect x="4.6" y="12.6" width="12.8" height="1.8" fill="#f4f070" stroke="#8a5c00" stroke-width="1.1"/>
<rect x="4.6" y="16.6" width="2.8" height="1.8" fill="#f4f070" stroke="#8a5c00" stroke-width="1.1"/>
<rect x="9.6" y="16.6" width="2.8" height="1.8" fill="#f4f070" stroke="#8a5c00" stroke-width="1.1"/>
<rect x="14.6" y="16.6" width="2.8" height="1.8" fill="#f4f070" stroke="#8a5c00" stroke-width="1.1"/>
<path d="M25.2,9.8 L29,13.6 L32.8,9.8" stroke="#444" stroke-width="1.1" fill="none"/>
</svg>
<div style="left:150px;top:160px;width:31px;height:35px;background:#cce8ff;box-sizing:border-box;border:1px solid #99d1ff"></div>
<div style="left:155px;top:168px;width:24px;height:22px;background:#f0e870;box-sizing:border-box;border:1.3px solid #9a6000;border-radius:2px"></div>
<div style="left:-33px;top:171.46px;width:400px;text-align:center;font-size:16px;line-height:16px;color:#000;letter-spacing:-1.2px;">AR</div>
<svg style="left:185px;top:167px" width="24" height="23" viewBox="0 0 24 23"><polygon points="1,1.5 23,1.5 12,21.5" fill="#f0e870" stroke="#9a6000" stroke-width="1.1" stroke-linejoin="round"/></svg>
<div style="left:34.5px;top:164.84px;width:400px;text-align:center;font-size:12px;line-height:12px;color:#000;letter-spacing:-0.4px;">Bereik:</div>
<div style="left:34.5px;top:179.84px;width:400px;text-align:center;font-size:12px;line-height:12px;color:#000;letter-spacing:-0.3px;">80 V</div>
<svg style="left:261px;top:166px" width="24" height="23" viewBox="0 0 24 23"><polygon points="1.5,21.5 22.5,21.5 12,1.5" fill="#e6e6e6" stroke="#c8c8c8" stroke-width="1.1" stroke-linejoin="round"/></svg>
<div style="left:290px;top:162px;width:1px;height:33px;background:#7a7a7a"></div>
<div style="left:299.5px;top:164.84px;font-size:12px;line-height:12px;color:#000;white-space:nowrap;letter-spacing:-0.3px;">Probe:</div>
<div style="left:299.5px;top:179.84px;font-size:12px;line-height:12px;color:#000;white-space:nowrap;letter-spacing:-0.3px;">x1</div>
<div style="left:340px;top:162px;width:1px;height:33px;background:#7a7a7a"></div>
<svg style="left:348px;top:166px" width="25" height="25" viewBox="0 0 25 25">
<rect x="0.5" y="0.5" width="23" height="23" fill="#fff" stroke="#606060" stroke-width="1"/>
<rect x="1" y="1" width="22" height="3.5" fill="#e0e0e0"/>
<path d="M1,4.5 H23.5" stroke="#606060" stroke-width="1"/>
<circle cx="15.5" cy="2.7" r="0.9" fill="#888"/><circle cx="18.5" cy="2.7" r="0.9" fill="#888"/><circle cx="21.5" cy="2.7" r="0.9" fill="#f06060"/>
<rect x="2.5" y="8.5" width="19" height="10" fill="#fff" stroke="#606060" stroke-width="1"/>
<path d="M15.5,8.5 V18.5 M15.5,13.5 H21.5" stroke="#606060" stroke-width="1"/>
<polygon points="16.5,12.5 18.5,9.5 20.5,12.5" fill="#000"/><polygon points="16.5,14.5 18.5,17.5 20.5,14.5" fill="#000"/>
</svg>
<svg style="left:9px;top:199px" width="2" height="34" viewBox="0 0 2 34"><rect x="0" y="0" width="2" height="2" fill="#a8a8a8"/><rect x="0" y="0" width="1" height="1" fill="#e0e0e0"/><rect x="0" y="4" width="2" height="2" fill="#a8a8a8"/><rect x="0" y="4" width="1" height="1" fill="#e0e0e0"/><rect x="0" y="8" width="2" height="2" fill="#a8a8a8"/><rect x="0" y="8" width="1" height="1" fill="#e0e0e0"/><rect x="0" y="12" width="2" height="2" fill="#a8a8a8"/><rect x="0" y="12" width="1" height="1" fill="#e0e0e0"/><rect x="0" y="16" width="2" height="2" fill="#a8a8a8"/><rect x="0" y="16" width="1" height="1" fill="#e0e0e0"/><rect x="0" y="20" width="2" height="2" fill="#a8a8a8"/><rect x="0" y="20" width="1" height="1" fill="#e0e0e0"/><rect x="0" y="24" width="2" height="2" fill="#a8a8a8"/><rect x="0" y="24" width="1" height="1" fill="#e0e0e0"/><rect x="0" y="28" width="2" height="2" fill="#a8a8a8"/><rect x="0" y="28" width="1" height="1" fill="#e0e0e0"/><rect x="0" y="32" width="2" height="2" fill="#a8a8a8"/><rect x="0" y="32" width="1" height="1" fill="#e0e0e0"/></svg>
<svg style="left:17px;top:205px" width="25" height="25" viewBox="0 0 25 25">
<circle cx="12.5" cy="12.5" r="11.5" fill="#8e8e8e"/>
<circle cx="12.5" cy="12.5" r="9.6" fill="#c8c8c8"/>
<circle cx="12.5" cy="12.5" r="8.2" fill="#8a8a8a"/>
<circle cx="12.5" cy="12.5" r="7.4" fill="#78f4f4"/>
<circle cx="12.5" cy="12.5" r="3.6" fill="#ffff00"/>
<circle cx="12.5" cy="12.5" r="1.1" fill="#000"/>
</svg>
<div style="left:45.5px;top:211.84px;font-size:12px;line-height:12px;color:#000;white-space:nowrap;letter-spacing:-0.4px;">Kan10</div>
<svg style="left:84px;top:205px" width="26" height="26" viewBox="0 0 26 26">
<path d="M8.5,1.5 V24.5 L24.5,13 Z" fill="#fff" stroke="#000" stroke-width="1.2" stroke-linejoin="miter"/>
<path d="M2,8.5 H8.5 M2,17.5 H8.5 M10,8.5 H15 M12.5,6 V11 M10,17.5 H15" stroke="#000" stroke-width="1"/>
<circle cx="2.5" cy="8.5" r="1.6" fill="#000"/><circle cx="2.5" cy="17.5" r="1.6" fill="#000"/>
</svg>
<div style="left:112px;top:207px;width:38px;height:22px;background:#fff;box-sizing:border-box;border:1px solid #7a7a7a"></div>
<svg style="left:112px;top:207px" width="38" height="22" viewBox="0 0 38 22">
<path d="M7.3,3.4 L10.9,10.5 L14.5,3.4" stroke="#222" stroke-width="1.3" fill="none" stroke-linecap="round"/>
<rect x="4.6" y="12.6" width="12.8" height="1.8" fill="#f4f070" stroke="#8a5c00" stroke-width="1.1"/>
<rect x="4.6" y="16.6" width="2.8" height="1.8" fill="#f4f070" stroke="#8a5c00" stroke-width="1.1"/>
<rect x="9.6" y="16.6" width="2.8" height="1.8" fill="#f4f070" stroke="#8a5c00" stroke-width="1.1"/>
<rect x="14.6" y="16.6" width="2.8" height="1.8" fill="#f4f070" stroke="#8a5c00" stroke-width="1.1"/>
<path d="M25.2,9.8 L29,13.6 L32.8,9.8" stroke="#444" stroke-width="1.1" fill="none"/>
</svg>
<div style="left:150px;top:200px;width:31px;height:35px;background:#cce8ff;box-sizing:border-box;border:1px solid #99d1ff"></div>
<div style="left:155px;top:208px;width:24px;height:22px;background:#f0e870;box-sizing:border-box;border:1.3px solid #9a6000;border-radius:2px"></div>
<div style="left:-33px;top:211.46px;width:400px;text-align:center;font-size:16px;line-height:16px;color:#000;letter-spacing:-1.2px;">AR</div>
<svg style="left:185px;top:207px" width="24" height="23" viewBox="0 0 24 23"><polygon points="1,1.5 23,1.5 12,21.5" fill="#f0e870" stroke="#9a6000" stroke-width="1.1" stroke-linejoin="round"/></svg>
<div style="left:34.5px;top:204.84px;width:400px;text-align:center;font-size:12px;line-height:12px;color:#000;letter-spacing:-0.4px;">Bereik:</div>
<div style="left:34.5px;top:219.84px;width:400px;text-align:center;font-size:12px;line-height:12px;color:#000;letter-spacing:-0.3px;">80 V</div>
<svg style="left:261px;top:206px" width="24" height="23" viewBox="0 0 24 23"><polygon points="1.5,21.5 22.5,21.5 12,1.5" fill="#e6e6e6" stroke="#c8c8c8" stroke-width="1.1" stroke-linejoin="round"/></svg>
<div style="left:290px;top:202px;width:1px;height:33px;background:#7a7a7a"></div>
<div style="left:299.5px;top:204.84px;font-size:12px;line-height:12px;color:#000;white-space:nowrap;letter-spacing:-0.3px;">Probe:</div>
<div style="left:299.5px;top:219.84px;font-size:12px;line-height:12px;color:#000;white-space:nowrap;letter-spacing:-0.3px;">x1</div>
<div style="left:340px;top:202px;width:1px;height:33px;background:#7a7a7a"></div>
<svg style="left:348px;top:206px" width="25" height="25" viewBox="0 0 25 25">
<rect x="0.5" y="0.5" width="23" height="23" fill="#fff" stroke="#606060" stroke-width="1"/>
<rect x="1" y="1" width="22" height="3.5" fill="#e0e0e0"/>
<path d="M1,4.5 H23.5" stroke="#606060" stroke-width="1"/>
<circle cx="15.5" cy="2.7" r="0.9" fill="#888"/><circle cx="18.5" cy="2.7" r="0.9" fill="#888"/><circle cx="21.5" cy="2.7" r="0.9" fill="#f06060"/>
<rect x="2.5" y="8.5" width="19" height="10" fill="#fff" stroke="#606060" stroke-width="1"/>
<path d="M15.5,8.5 V18.5 M15.5,13.5 H21.5" stroke="#606060" stroke-width="1"/>
<polygon points="16.5,12.5 18.5,9.5 20.5,12.5" fill="#000"/><polygon points="16.5,14.5 18.5,17.5 20.5,14.5" fill="#000"/>
</svg>
<svg style="left:635px;top:159px" width="2" height="34" viewBox="0 0 2 34"><rect x="0" y="0" width="2" height="2" fill="#a8a8a8"/><rect x="0" y="0" width="1" height="1" fill="#e0e0e0"/><rect x="0" y="4" width="2" height="2" fill="#a8a8a8"/><rect x="0" y="4" width="1" height="1" fill="#e0e0e0"/><rect x="0" y="8" width="2" height="2" fill="#a8a8a8"/><rect x="0" y="8" width="1" height="1" fill="#e0e0e0"/><rect x="0" y="12" width="2" height="2" fill="#a8a8a8"/><rect x="0" y="12" width="1" height="1" fill="#e0e0e0"/><rect x="0" y="16" width="2" height="2" fill="#a8a8a8"/><rect x="0" y="16" width="1" height="1" fill="#e0e0e0"/><rect x="0" y="20" width="2" height="2" fill="#a8a8a8"/><rect x="0" y="20" width="1" height="1" fill="#e0e0e0"/><rect x="0" y="24" width="2" height="2" fill="#a8a8a8"/><rect x="0" y="24" width="1" height="1" fill="#e0e0e0"/><rect x="0" y="28" width="2" height="2" fill="#a8a8a8"/><rect x="0" y="28" width="1" height="1" fill="#e0e0e0"/><rect x="0" y="32" width="2" height="2" fill="#a8a8a8"/><rect x="0" y="32" width="1" height="1" fill="#e0e0e0"/></svg>
<svg style="left:643px;top:165px" width="25" height="25" viewBox="0 0 25 25">
<circle cx="12.5" cy="12.5" r="11.5" fill="#8e8e8e"/>
<circle cx="12.5" cy="12.5" r="9.6" fill="#c8c8c8"/>
<circle cx="12.5" cy="12.5" r="8.2" fill="#8a8a8a"/>
<circle cx="12.5" cy="12.5" r="7.4" fill="#ffff80"/>
<circle cx="12.5" cy="12.5" r="3.6" fill="#ffff00"/>
<circle cx="12.5" cy="12.5" r="1.1" fill="#000"/>
</svg>
<div style="left:671.5px;top:171.84px;font-size:12px;line-height:12px;color:#000;white-space:nowrap;letter-spacing:-0.4px;">Kan11</div>
<svg style="left:710px;top:165px" width="26" height="26" viewBox="0 0 26 26">
<path d="M8.5,1.5 V24.5 L24.5,13 Z" fill="#fff" stroke="#000" stroke-width="1.2" stroke-linejoin="miter"/>
<path d="M2,8.5 H8.5 M2,17.5 H8.5 M10,8.5 H15 M12.5,6 V11 M10,17.5 H15" stroke="#000" stroke-width="1"/>
<circle cx="2.5" cy="8.5" r="1.6" fill="#000"/><circle cx="2.5" cy="17.5" r="1.6" fill="#000"/>
</svg>
<div style="left:738px;top:167px;width:38px;height:22px;background:#fff;box-sizing:border-box;border:1px solid #7a7a7a"></div>
<svg style="left:738px;top:167px" width="38" height="22" viewBox="0 0 38 22">
<path d="M7.3,3.4 L10.9,10.5 L14.5,3.4" stroke="#222" stroke-width="1.3" fill="none" stroke-linecap="round"/>
<rect x="4.6" y="12.6" width="12.8" height="1.8" fill="#f4f070" stroke="#8a5c00" stroke-width="1.1"/>
<rect x="4.6" y="16.6" width="2.8" height="1.8" fill="#f4f070" stroke="#8a5c00" stroke-width="1.1"/>
<rect x="9.6" y="16.6" width="2.8" height="1.8" fill="#f4f070" stroke="#8a5c00" stroke-width="1.1"/>
<rect x="14.6" y="16.6" width="2.8" height="1.8" fill="#f4f070" stroke="#8a5c00" stroke-width="1.1"/>
<path d="M25.2,9.8 L29,13.6 L32.8,9.8" stroke="#444" stroke-width="1.1" fill="none"/>
</svg>
<div style="left:776px;top:160px;width:31px;height:35px;background:#cce8ff;box-sizing:border-box;border:1px solid #99d1ff"></div>
<div style="left:781px;top:168px;width:24px;height:22px;background:#f0e870;box-sizing:border-box;border:1.3px solid #9a6000;border-radius:2px"></div>
<div style="left:593px;top:171.46px;width:400px;text-align:center;font-size:16px;line-height:16px;color:#000;letter-spacing:-1.2px;">AR</div>
<svg style="left:811px;top:167px" width="24" height="23" viewBox="0 0 24 23"><polygon points="1,1.5 23,1.5 12,21.5" fill="#f0e870" stroke="#9a6000" stroke-width="1.1" stroke-linejoin="round"/></svg>
<div style="left:660.5px;top:164.84px;width:400px;text-align:center;font-size:12px;line-height:12px;color:#000;letter-spacing:-0.4px;">Bereik:</div>
<div style="left:660.5px;top:179.84px;width:400px;text-align:center;font-size:12px;line-height:12px;color:#000;letter-spacing:-0.3px;">80 V</div>
<svg style="left:887px;top:166px" width="24" height="23" viewBox="0 0 24 23"><polygon points="1.5,21.5 22.5,21.5 12,1.5" fill="#e6e6e6" stroke="#c8c8c8" stroke-width="1.1" stroke-linejoin="round"/></svg>
<div style="left:916px;top:162px;width:1px;height:33px;background:#7a7a7a"></div>
<div style="left:925.5px;top:164.84px;font-size:12px;line-height:12px;color:#000;white-space:nowrap;letter-spacing:-0.3px;">Probe:</div>
<div style="left:925.5px;top:179.84px;font-size:12px;line-height:12px;color:#000;white-space:nowrap;letter-spacing:-0.3px;">x1</div>
<div style="left:966px;top:162px;width:1px;height:33px;background:#7a7a7a"></div>
<svg style="left:974px;top:166px" width="25" height="25" viewBox="0 0 25 25">
<rect x="0.5" y="0.5" width="23" height="23" fill="#fff" stroke="#606060" stroke-width="1"/>
<rect x="1" y="1" width="22" height="3.5" fill="#e0e0e0"/>
<path d="M1,4.5 H23.5" stroke="#606060" stroke-width="1"/>
<circle cx="15.5" cy="2.7" r="0.9" fill="#888"/><circle cx="18.5" cy="2.7" r="0.9" fill="#888"/><circle cx="21.5" cy="2.7" r="0.9" fill="#f06060"/>
<rect x="2.5" y="8.5" width="19" height="10" fill="#fff" stroke="#606060" stroke-width="1"/>
<path d="M15.5,8.5 V18.5 M15.5,13.5 H21.5" stroke="#606060" stroke-width="1"/>
<polygon points="16.5,12.5 18.5,9.5 20.5,12.5" fill="#000"/><polygon points="16.5,14.5 18.5,17.5 20.5,14.5" fill="#000"/>
</svg>
<svg style="left:635px;top:199px" width="2" height="34" viewBox="0 0 2 34"><rect x="0" y="0" width="2" height="2" fill="#a8a8a8"/><rect x="0" y="0" width="1" height="1" fill="#e0e0e0"/><rect x="0" y="4" width="2" height="2" fill="#a8a8a8"/><rect x="0" y="4" width="1" height="1" fill="#e0e0e0"/><rect x="0" y="8" width="2" height="2" fill="#a8a8a8"/><rect x="0" y="8" width="1" height="1" fill="#e0e0e0"/><rect x="0" y="12" width="2" height="2" fill="#a8a8a8"/><rect x="0" y="12" width="1" height="1" fill="#e0e0e0"/><rect x="0" y="16" width="2" height="2" fill="#a8a8a8"/><rect x="0" y="16" width="1" height="1" fill="#e0e0e0"/><rect x="0" y="20" width="2" height="2" fill="#a8a8a8"/><rect x="0" y="20" width="1" height="1" fill="#e0e0e0"/><rect x="0" y="24" width="2" height="2" fill="#a8a8a8"/><rect x="0" y="24" width="1" height="1" fill="#e0e0e0"/><rect x="0" y="28" width="2" height="2" fill="#a8a8a8"/><rect x="0" y="28" width="1" height="1" fill="#e0e0e0"/><rect x="0" y="32" width="2" height="2" fill="#a8a8a8"/><rect x="0" y="32" width="1" height="1" fill="#e0e0e0"/></svg>
<svg style="left:643px;top:205px" width="25" height="25" viewBox="0 0 25 25">
<circle cx="12.5" cy="12.5" r="11.5" fill="#8e8e8e"/>
<circle cx="12.5" cy="12.5" r="9.6" fill="#c8c8c8"/>
<circle cx="12.5" cy="12.5" r="8.2" fill="#8a8a8a"/>
<circle cx="12.5" cy="12.5" r="7.4" fill="#ff00ff"/>
<circle cx="12.5" cy="12.5" r="3.6" fill="#ffff00"/>
<circle cx="12.5" cy="12.5" r="1.1" fill="#000"/>
</svg>
<div style="left:671.5px;top:211.84px;font-size:12px;line-height:12px;color:#000;white-space:nowrap;letter-spacing:-0.4px;">Kan12</div>
<svg style="left:710px;top:205px" width="26" height="26" viewBox="0 0 26 26">
<path d="M8.5,1.5 V24.5 L24.5,13 Z" fill="#fff" stroke="#000" stroke-width="1.2" stroke-linejoin="miter"/>
<path d="M2,8.5 H8.5 M2,17.5 H8.5 M10,8.5 H15 M12.5,6 V11 M10,17.5 H15" stroke="#000" stroke-width="1"/>
<circle cx="2.5" cy="8.5" r="1.6" fill="#000"/><circle cx="2.5" cy="17.5" r="1.6" fill="#000"/>
</svg>
<div style="left:738px;top:207px;width:38px;height:22px;background:#fff;box-sizing:border-box;border:1px solid #7a7a7a"></div>
<svg style="left:738px;top:207px" width="38" height="22" viewBox="0 0 38 22">
<path d="M7.3,3.4 L10.9,10.5 L14.5,3.4" stroke="#222" stroke-width="1.3" fill="none" stroke-linecap="round"/>
<rect x="4.6" y="12.6" width="12.8" height="1.8" fill="#f4f070" stroke="#8a5c00" stroke-width="1.1"/>
<rect x="4.6" y="16.6" width="2.8" height="1.8" fill="#f4f070" stroke="#8a5c00" stroke-width="1.1"/>
<rect x="9.6" y="16.6" width="2.8" height="1.8" fill="#f4f070" stroke="#8a5c00" stroke-width="1.1"/>
<rect x="14.6" y="16.6" width="2.8" height="1.8" fill="#f4f070" stroke="#8a5c00" stroke-width="1.1"/>
<path d="M25.2,9.8 L29,13.6 L32.8,9.8" stroke="#444" stroke-width="1.1" fill="none"/>
</svg>
<div style="left:776px;top:200px;width:31px;height:35px;background:#cce8ff;box-sizing:border-box;border:1px solid #99d1ff"></div>
<div style="left:781px;top:208px;width:24px;height:22px;background:#f0e870;box-sizing:border-box;border:1.3px solid #9a6000;border-radius:2px"></div>
<div style="left:593px;top:211.46px;width:400px;text-align:center;font-size:16px;line-height:16px;color:#000;letter-spacing:-1.2px;">AR</div>
<svg style="left:811px;top:207px" width="24" height="23" viewBox="0 0 24 23"><polygon points="1,1.5 23,1.5 12,21.5" fill="#f0e870" stroke="#9a6000" stroke-width="1.1" stroke-linejoin="round"/></svg>
<div style="left:660.5px;top:204.84px;width:400px;text-align:center;font-size:12px;line-height:12px;color:#000;letter-spacing:-0.4px;">Bereik:</div>
<div style="left:660.5px;top:219.84px;width:400px;text-align:center;font-size:12px;line-height:12px;color:#000;letter-spacing:-0.3px;">80 V</div>
<svg style="left:887px;top:206px" width="24" height="23" viewBox="0 0 24 23"><polygon points="1.5,21.5 22.5,21.5 12,1.5" fill="#e6e6e6" stroke="#c8c8c8" stroke-width="1.1" stroke-linejoin="round"/></svg>
<div style="left:916px;top:202px;width:1px;height:33px;background:#7a7a7a"></div>
<div style="left:925.5px;top:204.84px;font-size:12px;line-height:12px;color:#000;white-space:nowrap;letter-spacing:-0.3px;">Probe:</div>
<div style="left:925.5px;top:219.84px;font-size:12px;line-height:12px;color:#000;white-space:nowrap;letter-spacing:-0.3px;">x1</div>
<div style="left:966px;top:202px;width:1px;height:33px;background:#7a7a7a"></div>
<svg style="left:974px;top:206px" width="25" height="25" viewBox="0 0 25 25">
<rect x="0.5" y="0.5" width="23" height="23" fill="#fff" stroke="#606060" stroke-width="1"/>
<rect x="1" y="1" width="22" height="3.5" fill="#e0e0e0"/>
<path d="M1,4.5 H23.5" stroke="#606060" stroke-width="1"/>
<circle cx="15.5" cy="2.7" r="0.9" fill="#888"/><circle cx="18.5" cy="2.7" r="0.9" fill="#888"/><circle cx="21.5" cy="2.7" r="0.9" fill="#f06060"/>
<rect x="2.5" y="8.5" width="19" height="10" fill="#fff" stroke="#606060" stroke-width="1"/>
<path d="M15.5,8.5 V18.5 M15.5,13.5 H21.5" stroke="#606060" stroke-width="1"/>
<polygon points="16.5,12.5 18.5,9.5 20.5,12.5" fill="#000"/><polygon points="16.5,14.5 18.5,17.5 20.5,14.5" fill="#000"/>
</svg>
<div style="left:116px;top:253px;width:1px;height:31px;background:#a0a0a0"></div>
<div style="left:153px;top:253px;width:1px;height:31px;background:#a0a0a0"></div>
<div style="left:283px;top:253px;width:1px;height:31px;background:#a0a0a0"></div>
<div style="left:382px;top:253px;width:1px;height:31px;background:#a0a0a0"></div>
<div style="left:796px;top:253px;width:1px;height:31px;background:#a0a0a0"></div>
<svg style="left:87px;top:256px" width="24" height="24" viewBox="0 0 24 24">
<rect x="0" y="0" width="24" height="24" fill="#000" stroke="#555" stroke-width="0.8"/>
<path d="M11.5,2 V22" stroke="#fff" stroke-width="1.2"/>
<path d="M2,12 L11.5,4 L21,8.5" stroke="#00ff00" stroke-width="2" fill="none"/>
<text x="3" y="21" font-family="Liberation Sans" font-size="9" fill="#ddd">0</text>
</svg>
<svg style="left:123px;top:256px" width="27" height="25" viewBox="0 0 27 25">
<rect x="1.5" y="1.5" width="7.5" height="5" fill="#00ee00" stroke="#008000" stroke-width="0.8"/>
<rect x="1.5" y="10.5" width="7.5" height="5" fill="#00f0f0" stroke="#008080" stroke-width="0.8"/>
<rect x="1.5" y="19.5" width="7.5" height="5" fill="#1e78f0" stroke="#0040a0" stroke-width="0.8"/>
<path d="M9,3.5 H25 M9,12.5 H25 M9,21.5 H25" stroke="#808080" stroke-width="1"/>
<path d="M19.5,4.5 V11.5 M19.5,13.5 V20.5" stroke="#000" stroke-width="1.2"/>
<polygon points="17.5,6.5 19.5,4 21.5,6.5" fill="#000"/><polygon points="17.5,9.5 19.5,12 21.5,9.5" fill="#000"/>
<polygon points="17.5,15.5 19.5,13 21.5,15.5" fill="#000"/><polygon points="17.5,18.5 19.5,21 21.5,18.5" fill="#000"/>
</svg>
<svg style="left:161px;top:257px" width="24" height="24" viewBox="0 0 24 24">
<rect x="0.5" y="0.5" width="23" height="22.5" fill="#fff" stroke="#8a8a8a" stroke-width="1"/>
<rect x="1" y="1" width="22" height="4" fill="#c8c8c8"/>
<path d="M6.5,1 V5 M12,1 V5 M17.5,1 V5" stroke="#fff" stroke-width="0.8"/>
<path d="M1,5.5 H23 M1,16.5 H23" stroke="#8a8a8a" stroke-width="1"/>
<path d="M3,8.5 H9 M12,8.5 H15 M18,8.5 H21 M3,11.5 H9 M12,11.5 H15 M18,11.5 H21 M3,14 H9 M12,14 H15 M18,14 H21 M3,20 H6 M9,20 H12 M14.5,20 H17 M19.5,20 H21.5" stroke="#000" stroke-width="1.1"/>
</svg>
<svg style="left:192px;top:256px" width="24" height="24" viewBox="0 0 24 24">
<rect x="0" y="0" width="24" height="24" fill="#000"/>
<path d="M5.5,2 V22 M18.5,2 V22" stroke="#fff" stroke-width="1.1"/>
<path d="M1,12.5 L12,3.5 L22.5,9" stroke="#00ff00" stroke-width="2" fill="none"/>
</svg>
<svg style="left:223px;top:256px" width="24" height="24" viewBox="0 0 24 24">
<rect x="0" y="0" width="24" height="24" fill="#000"/>
<path d="M2,5.5 H22 M2,18.5 H22" stroke="#fff" stroke-width="1.1"/>
<path d="M1,12.5 L12,3.5 L22.5,9" stroke="#00ff00" stroke-width="2" fill="none"/>
</svg>
<svg style="left:254px;top:256px" width="24" height="24" viewBox="0 0 24 24">
<rect x="0" y="0" width="24" height="24" fill="#b4b4b4"/>
<path d="M5.5,2 V22 M18.5,2 V22 M2,5.5 H22 M2,18.5 H22" stroke="#eee" stroke-width="1.1"/>
<path d="M8,10 A5,5 0 0 1 16,10 M16,14 A5,5 0 0 1 8,14" stroke="#ccc" stroke-width="1.5" fill="none"/>
</svg>
<svg style="left:291px;top:256px" width="25" height="25" viewBox="0 0 25 25">
<path d="M14,14 L22.5,22.5" stroke="#ff0000" stroke-width="3" stroke-linecap="round"/>
<circle cx="8.5" cy="8.5" r="7.5" fill="#e6ffff" stroke="#000" stroke-width="1.4"/>
<path d="M4.5,8.5 H12.5 M8.5,4.5 V12.5" stroke="#000" stroke-width="1.5"/></svg>
<svg style="left:322px;top:256px" width="25" height="25" viewBox="0 0 25 25">
<path d="M14,14 L22.5,22.5" stroke="#b8b8b8" stroke-width="3" stroke-linecap="round"/>
<circle cx="8.5" cy="8.5" r="7.5" fill="#fff" stroke="#c0c0c0" stroke-width="1.4"/>
<path d="M4.5,8.5 H12.5" stroke="#c0c0c0" stroke-width="1.1"/></svg>
<svg style="left:353px;top:256px" width="25" height="25" viewBox="0 0 25 25">
<path d="M14,14 L22.5,22.5" stroke="#ff0000" stroke-width="3" stroke-linecap="round"/>
<circle cx="8.5" cy="8.5" r="7.5" fill="#e6ffff" stroke="#000" stroke-width="1.4"/>
<path d="M5.5,5 V12 M11.5,5 V12" stroke="#000" stroke-width="1.3"/><rect x="8" y="6.3" width="1.2" height="1.2" fill="#000"/><rect x="8" y="9.8" width="1.2" height="1.2" fill="#000"/></svg>
<svg style="left:390px;top:258px" width="26" height="24" viewBox="0 0 26 24">
<path d="M3,12 Q13,2 23,12 Q13,21 3,12 Z" fill="#fff" stroke="#c0c0c0" stroke-width="1.3"/>
<circle cx="13" cy="11.5" r="4.2" fill="#b8b8b8"/><circle cx="13" cy="11.5" r="1.2" fill="#eee"/>
<path d="M5,20 L19,2 M7,2 L21,20" stroke="#d0d0d0" stroke-width="1.3"/>
</svg>
<svg style="left:736px;top:256px" width="25" height="25" viewBox="0 0 25 25">
<rect x="0.5" y="0.5" width="23" height="13" rx="2.5" fill="#fff6a0" stroke="#000" stroke-width="1.1"/>
<text x="2" y="6" font-family="Liberation Sans" font-size="4.5" fill="#6a6a00">Comment</text>
<text x="2" y="11.5" font-family="Liberation Sans" font-size="4.5" fill="#6a6a00">Text</text>
<rect x="10" y="12.5" width="4" height="2" fill="#f00"/>
<path d="M13,14.5 L20,21" stroke="#000" stroke-width="1.3"/>
<polygon points="23.5,17.5 23.5,24 17,24" fill="#000"/>
</svg>
<svg style="left:767px;top:256px" width="25" height="25" viewBox="0 0 25 25">
<rect x="1.5" y="5" width="21" height="14" rx="3" fill="#eee" stroke="#c8c8c8" stroke-width="1.2"/>
<path d="M2,2 L22,22 M22,2 L2,22" stroke="#c0c0c0" stroke-width="2.5"/>
</svg>
<svg style="left:804px;top:256px" width="24" height="24" viewBox="0 0 24 24">
<rect x="0" y="0" width="24" height="24" fill="#000" stroke="#555" stroke-width="0.8"/>
<rect x="2" y="3" width="3" height="3" fill="#00ff00"/><rect x="2" y="8.5" width="3" height="3" fill="#00ffff"/>
<text x="6.5" y="7" font-family="Liberation Sans" font-size="6.5" fill="#ddd">Ch1</text>
<text x="6.5" y="12.5" font-family="Liberation Sans" font-size="6.5" fill="#ddd">Ch2</text>
</svg>
<svg style="left:835px;top:256px" width="24" height="24" viewBox="0 0 24 24">
<rect x="0" y="0" width="24" height="24" fill="#000" stroke="#555" stroke-width="0.8"/>
<path d="M1,12 Q4,2 7,3 Q10,4 13,12 Q15,15 19,14 Q21,13 22.5,11" stroke="#00ff00" stroke-width="1.8" fill="none"/>
<path d="M1,14 Q4,20 8,19 Q11,18 15,14 Q19,12 22.5,17" stroke="#00e8ff" stroke-width="1.8" fill="none"/>
</svg>
<svg style="left:866px;top:256px" width="25" height="25" viewBox="0 0 25 25">
<rect x="0.5" y="0.5" width="23" height="23" fill="#fff" stroke="#c8c8c8" stroke-width="1"/>
<path d="M1,4.5 H23" stroke="#d8d8d8" stroke-width="1"/>
<rect x="2" y="13" width="10" height="9" fill="#b4b4b4"/>
<path d="M3,18 Q5,13 7,17 Q9,21 11,16" stroke="#e8e8e8" stroke-width="0.8" fill="none"/>
<path d="M13.5,10.5 L20,4.5 M16.5,4.5 H20 V8" stroke="#b0b0b0" stroke-width="1.1" fill="none"/>
</svg>
<svg style="left:896px;top:255px" width="26" height="26" viewBox="0 0 26 26">
<ellipse cx="18" cy="20" rx="5.5" ry="3.8" fill="none" stroke="#e4e4e4" stroke-width="0.8" stroke-dasharray="1.5,1"/>
<polygon points="0.5,0.5 4.5,0.5 10.5,6.5 5.5,11.5 0.5,6.5" fill="#e8a010" stroke="#000" stroke-width="1"/>
<path d="M2,3 L7.5,8.5" stroke="#c07000" stroke-width="0.8"/>
<rect x="2" y="5" width="1.2" height="1.2" fill="#ff6060"/><rect x="5" y="7.5" width="1.2" height="1.2" fill="#ff6060"/>
<polygon points="10.5,6.5 15.5,11.5 10.5,16.5 5.5,11.5" fill="#c0c0c0" stroke="#000" stroke-width="1"/>
<polygon points="15.5,11.5 18.3,14.8 13.3,19.5 10.5,16.5" fill="#b00000" stroke="#600" stroke-width="0.8"/>
</svg>
<svg style="left:928px;top:256px" width="24" height="24" viewBox="0 0 24 24"><path d="M4,1 L12,9 L20,1 L23,4 L15,12 L23,20 L20,23 L12,15 L4,23 L1,20 L9,12 L1,4 Z" fill="#d6d6d6" stroke="#b4b4b4" stroke-width="1"/></svg>
<div style="left:954.5px;top:262.46px;font-size:16px;line-height:16px;color:#000030;white-space:nowrap;letter-spacing:0px;font-weight:bold">1</div>
<div style="left:1007px;top:580px;width:2px;height:2px;background:#b8b8b8"></div>
<div style="left:1003px;top:584px;width:2px;height:2px;background:#b8b8b8"></div>
<div style="left:1007px;top:584px;width:2px;height:2px;background:#b8b8b8"></div>
<div style="left:999px;top:588px;width:2px;height:2px;background:#b8b8b8"></div>
<div style="left:1003px;top:588px;width:2px;height:2px;background:#b8b8b8"></div>
<div style="left:1007px;top:588px;width:2px;height:2px;background:#b8b8b8"></div>
</body></html>
